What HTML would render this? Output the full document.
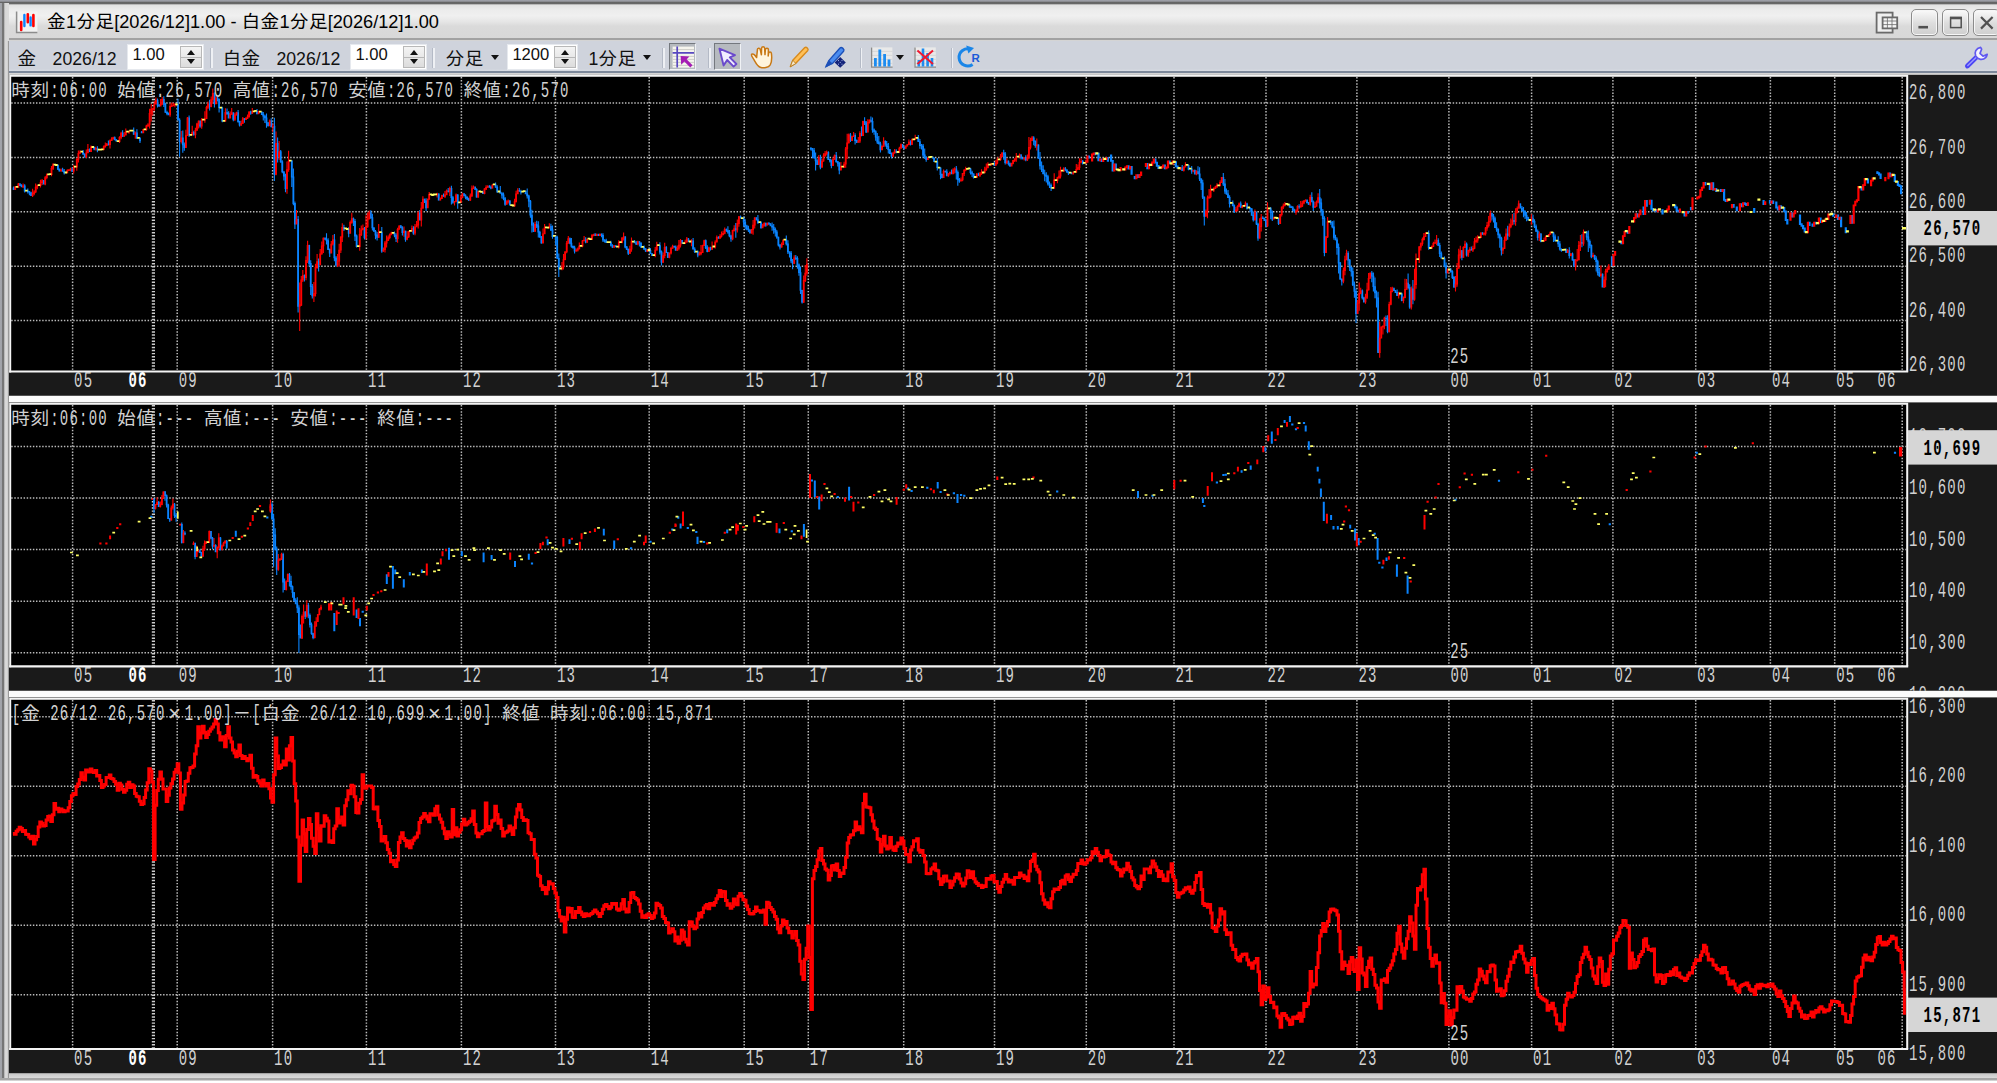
<!DOCTYPE html>
<html lang="ja"><head><meta charset="utf-8"><title>金1分足[2026/12]1.00 - 白金1分足[2026/12]1.00</title>
<style>
html,body{margin:0;padding:0}
body{width:1997px;height:1083px;position:relative;overflow:hidden;background:#d4d4d4;font-family:"Liberation Sans","IPAGothic","Noto Sans CJK JP",sans-serif;color:#111}
.abs{position:absolute}
#frameL{left:0;top:3px;width:9px;height:1075.4px;background:linear-gradient(90deg,#a4a6ac 0,#a0a2a8 1.6px,#787878 2.4px,#6a6a6a 3.2px,#8a8a8a 4px,#d6d6d6 4.8px,#dadada 7.4px,#9a9a9a 8.1px,#9a9a9a 9px)}
#frameL2{left:7px;top:3px;width:2px;height:37.6px;background:#dadada}
#frameT{left:0;top:0;width:1997px;height:5px;background:linear-gradient(180deg,#9c9ea6 0,#9a9ca4 1.2px,#747476 1.9px,#626262 2.6px,#626262 3.4px,#808080 4px,#c4c4c4 4.6px,#e2e2e2 5px)}
#title{left:4px;top:4.6px;width:1993px;height:33.9px;background:linear-gradient(180deg,#e2e2e2 0,#ececec 15%,#f0f0f0 33%,#e6e6e6 50%,#dadada 64%,#d8d8d8 100%);border-bottom:2.4px solid #a2a2a2}
#tool{left:9px;top:40.9px;width:1988px;height:30.6px;background:linear-gradient(180deg,#cfd3dc 0,#cfd3dc 93%,#d8dce3 100%);border-bottom:2.5px solid #7c889a}
#gapw{left:9px;top:74px;width:1988px;height:2px;background:#fff}
.sepw{left:9px;width:1988px;height:6.4px;background:#fbfbfb;border-bottom:1.5px solid #9a9a9a}
#bot{left:0;top:1073.2px;width:1997px;height:10px;background:linear-gradient(180deg,#c6c6c6 0,#d8d8d8 4.6px,#a6a6a6 5.4px,#a6a6a6 7.2px,#fff 7.8px)}
.tt{position:absolute;white-space:nowrap;line-height:1}
.j{font-family:"Liberation Sans","IPAGothic","Noto Sans CJK JP",sans-serif}
.spin{position:absolute;top:44px;height:26px;background:#fff;border:1px solid #e6e9ee;box-sizing:border-box}
.spin .bt{position:absolute;right:1px;top:1px;width:22px;bottom:1px;background:linear-gradient(180deg,#f4f4f4,#dcdcdc);border:1px solid #b8b8b8;box-sizing:border-box}
.spin .bt:before{content:"";position:absolute;left:0;right:0;top:50%;border-top:1px solid #b8b8b8}
.spin .bt i{position:absolute;left:5.5px;width:0;height:0;border-left:4.6px solid transparent;border-right:4.6px solid transparent}
.spin .bt i.u{top:3.2px;border-bottom:5.4px solid #111}
.spin .bt i.d{bottom:3.2px;border-top:5.4px solid #111}
.vsep{position:absolute;top:48px;width:1.6px;height:20px;background:#eef0f4;box-shadow:-1px 0 0 #b4bac6}
.dd{position:absolute;top:55.4px;width:0;height:0;border-left:4.2px solid transparent;border-right:4.2px solid transparent;border-top:5px solid #111}
.pressed{position:absolute;top:43.4px;height:26.4px;box-sizing:border-box;background:#b6babf;border:1.8px solid #74787e;border-right:1.6px solid #f0f2f5;border-bottom:1.6px solid #f0f2f5}
.wbtn{position:absolute;top:9.4px;height:26.4px;width:26.6px;box-sizing:border-box;border:1.9px solid #8c8c8c;border-radius:5px;background:linear-gradient(180deg,#fafafa,#dcdcdc 55%,#cfcfcf);box-shadow:inset 0 0 0 1px #f6f6f6}
</style></head><body>
<div class="abs" id="title"></div>
<div class="abs" id="frameT"></div>
<div class="abs" id="tool"></div>
<div class="abs" id="gapw"></div>
<div class="abs sepw" style="top:395.7px"></div>
<div class="abs sepw" style="top:690.7px"></div>
<div class="abs" id="bot"></div>
<div class="abs" id="frameL"></div>
<div class="abs" id="frameL2"></div>
<svg width="1997" height="1083" viewBox="0 0 1997 1083" style="position:absolute;left:0;top:0">
<style>.cj{font-family:"Liberation Mono","IPAGothic","Noto Sans CJK JP",monospace;font-size:19.25px}.la{font-family:"Liberation Mono","IPAGothic",monospace;font-size:14.00px;letter-spacing:1.22px;white-space:pre}</style>
<rect x="9" y="74.7" width="1988" height="321.0" fill="#1a1a1a"/>
<rect x="10.2" y="76.5" width="1897.0" height="295.0" fill="#000"/>
<clipPath id="cp0"><rect x="11.2" y="77.5" width="1895.0" height="293.0"/></clipPath>
<clipPath id="ca0"><rect x="9" y="75.5" width="1988" height="320.2"/></clipPath>
<path d="M11.2 103.0H1906.2M11.2 157.4H1906.2M11.2 211.8H1906.2M11.2 266.2H1906.2M11.2 320.6H1906.2M72.6 77.0V371.5M177.2 77.0V371.5M272.6 77.0V371.5M366.4 77.0V371.5M461.4 77.0V371.5M555.5 77.0V371.5M649.2 77.0V371.5M744.2 77.0V371.5M808.3 77.0V371.5M903.7 77.0V371.5M994.5 77.0V371.5M1086.3 77.0V371.5M1174.0 77.0V371.5M1266.0 77.0V371.5M1356.9 77.0V371.5M1448.9 77.0V371.5M1531.6 77.0V371.5M1612.9 77.0V371.5M1695.7 77.0V371.5M1770.4 77.0V371.5M1834.7 77.0V371.5M1902.2 77.0V371.5" stroke="#e0e0e0" stroke-width="1.5" stroke-dasharray="1.45 1.65" fill="none" opacity="0.84"/>
<path d="M153.4 77.0V371.5" stroke="#e0e0e0" stroke-width="3.2" stroke-dasharray="1.45 1.65" fill="none" opacity="0.92"/>
<g clip-path="url(#cp0)"><path d="M13.6 186.5V189.6M19.9 183.3V185.4M21.5 184.3V186.5M24.7 184.3V192.4M27.8 188.4V193.6M29.4 191.0V195.3M31.0 191.8V195.1M43.6 179.9V183.9M57.9 164.2V169.8M59.4 168.5V171.3M62.6 167.8V171.1M64.2 169.1V174.5M72.1 167.6V172.1M83.1 150.1V154.0M84.7 153.3V157.2M89.5 148.6V152.0M94.2 146.4V150.3M97.4 146.3V152.3M108.4 140.5V145.5M114.7 136.6V139.6M116.3 138.9V141.1M122.6 130.3V136.8M133.7 127.5V134.4M136.9 129.3V138.4M140.0 137.4V143.0M141.7 130.9V132.5M157.5 98.6V107.5M159.1 104.0V106.7M163.8 96.3V106.9M165.4 102.8V112.8M167.0 110.7V115.2M168.5 112.4V115.1M178.0 98.8V120.0M179.6 118.3V156.7M182.8 130.6V152.7M184.3 142.5V150.7M189.1 115.6V137.0M193.8 130.8V135.8M200.1 120.4V127.8M209.6 99.8V110.6M214.4 92.3V107.4M217.5 97.0V101.4M219.1 98.7V112.5M222.3 106.8V122.3M227.0 108.6V115.1M228.6 111.3V118.0M233.3 112.3V121.3M238.1 109.9V122.7M239.6 120.8V126.5M244.4 118.3V122.8M250.7 110.7V114.8M257.0 109.1V114.5M261.8 111.6V114.9M263.3 111.9V120.6M264.9 114.8V123.0M266.5 113.5V127.8M268.1 122.1V126.3M271.2 118.3V126.7M274.4 117.8V181.0M277.6 137.5V162.5M280.7 149.9V162.8M282.3 160.3V173.3M283.9 171.2V180.5M285.5 173.7V192.3M291.8 160.2V187.0M293.4 168.6V205.2M294.9 201.5V229.1M298.1 216.0V312.5M304.4 274.5V281.4M309.2 244.7V266.2M310.7 260.2V294.9M312.3 283.9V298.4M318.6 258.4V271.4M325.0 237.5V239.4M326.5 233.3V244.4M328.1 238.3V249.4M329.7 248.6V256.9M334.4 233.9V261.2M336.0 255.9V266.5M343.9 224.7V231.1M348.7 227.3V237.3M353.4 217.6V226.1M355.0 218.9V241.1M356.6 234.4V247.4M364.5 227.0V239.4M370.8 210.3V219.0M372.4 213.8V230.5M373.9 227.2V231.2M375.5 229.9V239.2M377.1 232.0V240.6M381.8 227.0V252.7M394.5 231.6V237.3M396.1 233.3V242.0M400.8 224.9V227.7M402.4 226.3V235.6M405.5 230.8V241.8M413.4 226.3V234.8M419.8 210.0V219.8M424.5 198.7V202.9M426.1 198.2V210.9M438.7 193.4V200.2M443.5 193.4V196.5M448.2 188.0V192.4M451.4 185.8V204.5M452.9 196.0V203.7M457.7 194.3V208.7M464.0 192.9V196.1M465.6 194.2V199.3M467.2 196.3V199.9M468.7 197.8V201.1M475.1 186.5V189.7M476.6 188.3V197.5M483.0 190.5V193.8M489.3 184.9V187.8M490.9 185.4V189.2M495.6 182.6V187.8M497.2 185.3V193.1M500.3 185.9V193.1M501.9 192.1V198.4M503.5 192.4V200.2M505.1 197.1V205.7M509.8 200.3V205.0M519.3 188.1V191.5M520.9 189.7V194.6M525.6 190.4V194.1M527.2 188.5V198.5M528.8 194.8V207.3M530.4 200.1V217.7M531.9 209.7V232.5M533.5 222.4V232.0M536.7 220.8V227.9M538.3 221.2V237.5M539.8 230.7V237.8M541.4 236.1V243.4M550.9 223.7V231.0M552.5 225.4V238.7M555.6 235.9V245.2M557.2 235.8V258.7M558.8 253.5V277.1M569.9 237.5V244.2M571.4 237.9V247.8M573.0 245.6V248.5M574.6 245.8V253.5M585.7 237.3V243.2M595.1 233.0V236.0M598.3 233.7V235.8M601.5 233.5V237.3M603.0 233.3V242.0M604.6 239.3V242.6M606.2 238.8V242.7M610.9 240.7V246.5M612.5 244.2V247.7M615.7 245.3V247.1M625.2 236.3V248.2M626.7 245.9V250.0M628.3 248.5V255.0M634.6 240.0V242.8M636.2 241.1V245.1M639.4 241.2V246.4M641.0 242.2V248.0M644.1 245.5V250.1M645.7 248.1V252.1M650.4 248.0V253.3M652.0 253.1V255.6M659.9 242.3V254.6M661.5 250.4V265.4M666.2 246.0V252.6M667.8 251.9V258.0M674.1 245.5V247.4M675.7 245.6V250.3M682.0 240.1V243.3M688.4 238.0V241.4M693.1 237.9V249.3M694.7 247.3V253.1M697.8 250.4V257.2M705.7 239.5V249.0M707.3 245.2V252.2M710.5 246.7V250.4M718.4 236.2V238.3M726.3 228.5V231.9M727.9 226.2V233.8M729.4 229.9V237.2M731.0 234.7V241.8M735.8 222.9V237.7M740.5 215.4V218.3M743.7 216.6V226.7M745.2 219.2V229.5M746.8 224.7V230.2M748.4 225.8V231.9M750.0 229.4V232.8M756.3 217.3V219.9M757.9 214.9V223.3M761.0 221.3V228.4M765.8 222.6V226.7M768.9 222.2V225.0M770.5 223.3V225.7M772.1 222.5V230.8M773.7 223.9V233.8M775.3 227.5V236.4M776.8 230.0V238.8M778.4 236.8V246.5M780.0 244.0V249.4M786.3 235.6V245.4M787.9 240.2V254.1M789.5 251.4V257.5M791.1 250.9V262.9M792.6 259.0V269.3M795.8 255.0V259.9M797.4 256.2V268.8M799.0 263.6V275.8M800.5 266.6V294.1M802.1 289.7V303.4M810.9 147.2V150.6M812.5 148.0V158.2M814.1 147.9V157.9M815.6 152.5V170.4M817.2 159.2V164.8M820.4 154.7V169.3M828.3 151.2V159.7M829.9 158.8V162.4M831.4 159.4V168.2M836.2 151.9V162.7M837.8 160.9V166.5M839.3 162.1V174.2M850.4 133.1V142.1M855.1 133.3V144.4M856.7 139.5V143.1M861.5 126.6V136.2M864.6 117.2V125.0M866.2 121.1V132.9M870.9 116.4V122.4M872.5 117.4V132.7M874.1 128.5V134.8M875.7 130.2V140.8M877.3 132.9V143.9M878.8 136.1V144.2M880.4 141.7V152.4M885.2 140.2V146.5M886.7 141.0V149.1M888.3 143.0V153.4M889.9 148.9V153.8M891.5 152.6V158.6M896.2 149.3V153.3M902.5 144.1V147.4M904.1 146.2V149.2M910.4 140.2V145.5M918.3 135.1V141.3M919.9 138.9V148.7M921.5 144.0V149.6M923.1 144.0V157.5M924.7 148.6V159.0M926.2 156.6V161.8M932.6 156.4V157.9M934.1 157.5V161.8M937.3 158.1V170.4M940.5 167.4V179.3M942.0 173.5V178.2M945.2 170.5V172.0M946.8 169.2V175.6M951.5 169.6V173.7M956.3 165.9V179.4M957.8 170.5V185.7M959.4 178.1V182.8M970.5 168.0V174.6M972.1 170.7V177.0M973.6 173.4V178.6M978.4 172.8V175.8M994.2 162.0V165.9M1003.7 149.7V159.7M1005.2 151.9V164.6M1008.4 160.4V165.5M1010.0 162.4V166.6M1021.0 154.0V159.5M1022.6 157.5V159.3M1025.8 155.3V161.3M1033.7 136.2V145.3M1035.3 140.6V147.7M1038.4 144.4V158.8M1040.0 152.0V169.5M1041.6 161.5V171.9M1043.2 165.2V173.9M1044.7 169.8V181.2M1046.3 172.2V182.5M1047.9 174.8V185.6M1049.5 181.4V188.0M1051.1 183.6V191.0M1065.3 166.9V171.3M1066.9 169.5V172.7M1068.4 171.2V174.9M1071.6 172.3V173.8M1082.7 159.9V164.4M1182.2 164.9V171.1M1188.5 164.5V170.2M1191.7 165.9V173.7M1194.8 169.5V173.9M1198.0 166.3V173.6M1199.6 167.3V180.9M1201.2 178.5V190.0M1202.7 179.8V199.1M1204.3 196.6V225.5M1223.3 173.0V186.1M1224.9 178.9V193.7M1226.4 188.4V194.7M1228.0 190.0V197.5M1229.6 195.3V207.5M1232.8 200.6V205.9M1234.3 204.4V212.9M1240.7 201.4V207.5M1247.0 202.8V209.4M1250.1 207.5V212.2M1251.7 207.9V215.3M1253.3 211.5V221.4M1256.5 211.5V224.9M1258.0 222.8V240.8M1262.8 216.3V218.6M1264.4 217.6V220.7M1265.9 219.1V227.3M1270.7 206.9V219.3M1272.3 210.5V221.1M1278.6 218.0V225.1M1289.6 204.2V207.4M1291.2 205.7V208.0M1292.8 206.0V210.9M1294.4 208.7V212.3M1299.1 204.2V208.7M1307.0 199.2V203.4M1308.6 202.1V204.7M1311.8 192.2V201.6M1313.3 200.6V211.1M1319.7 189.1V208.4M1321.2 198.6V215.7M1322.8 209.1V225.8M1324.4 216.3V256.2M1330.7 220.0V224.7M1332.3 220.9V228.2M1333.9 220.4V239.7M1335.5 234.8V240.3M1337.0 237.4V254.8M1338.6 243.5V273.6M1340.2 261.9V279.7M1341.8 278.6V285.5M1348.1 251.2V265.0M1349.7 259.1V271.0M1351.3 266.4V276.6M1352.8 267.6V286.0M1354.4 281.6V297.8M1356.0 288.5V323.1M1362.3 289.6V299.6M1363.9 296.8V302.4M1371.8 270.9V282.3M1373.4 272.6V291.6M1375.0 277.6V298.2M1376.5 290.4V307.4M1378.1 291.7V352.5M1386.0 315.6V325.9M1387.6 315.2V333.2M1393.9 287.6V291.1M1395.5 290.0V292.9M1397.1 289.6V296.1M1401.8 292.8V301.2M1408.1 273.6V289.2M1409.7 284.3V308.7M1412.9 280.0V304.3M1428.7 230.4V249.8M1438.2 238.3V245.9M1439.7 242.7V257.0M1441.3 251.4V258.2M1444.5 256.6V267.3M1446.1 262.4V278.4M1450.8 268.0V272.7M1452.4 270.2V279.0M1454.0 275.9V288.0M1461.9 250.0V260.2M1466.6 242.5V256.4M1471.3 246.4V250.2M1482.4 232.2V234.3M1491.9 212.7V220.5M1493.5 213.9V222.6M1495.0 216.8V228.1M1496.6 222.3V231.7M1498.2 228.3V238.3M1499.8 233.4V247.7M1501.4 236.8V255.5M1507.7 225.8V239.8M1514.0 213.0V224.5M1520.3 203.4V207.8M1521.9 206.0V211.8M1523.5 206.9V217.2M1525.1 210.2V219.1M1526.6 212.0V221.2M1528.2 216.7V220.0M1533.0 214.8V223.1M1534.5 219.2V228.0M1536.1 224.5V231.8M1537.7 229.4V240.6M1540.9 233.1V242.3M1553.5 231.9V242.1M1555.1 234.5V241.4M1558.2 236.2V246.9M1559.8 240.9V250.6M1561.4 248.4V251.7M1566.1 248.5V252.3M1569.3 247.2V258.6M1572.5 252.5V260.5M1574.0 258.9V265.9M1581.9 234.3V247.2M1586.7 231.0V240.3M1588.3 230.4V251.9M1589.8 239.6V248.3M1591.4 244.4V258.3M1594.6 254.7V260.0M1596.2 256.2V271.4M1597.7 259.8V275.5M1599.3 267.9V277.1M1602.5 273.6V286.9" stroke="#0a84ff" stroke-width="1.1" fill="none"/><path d="M15.2 186.2V189.4M18.4 183.0V187.5M23.1 183.4V187.9M32.6 188.7V196.9M34.2 190.3V195.2M35.7 183.5V193.0M37.3 184.7V189.3M40.5 179.7V187.5M42.1 179.1V185.0M45.2 175.9V185.2M46.8 173.5V179.2M51.5 166.0V176.3M53.1 163.3V169.9M61.0 168.5V171.2M67.3 169.3V172.8M68.9 169.3V170.4M70.5 167.8V171.3M73.7 165.1V173.6M76.8 158.0V170.8M78.4 150.4V162.4M80.0 150.2V153.5M86.3 149.6V158.0M87.9 144.1V152.9M91.0 145.5V152.1M95.8 146.7V150.5M103.7 145.6V150.3M105.3 142.4V147.5M106.8 142.9V145.9M110.0 139.6V148.5M111.6 137.2V140.9M113.2 136.8V138.9M119.5 136.2V143.0M121.1 131.7V139.3M124.2 132.1V136.7M125.8 128.6V134.9M129.0 130.8V133.8M135.3 131.4V138.8M143.3 129.0V132.5M146.4 124.7V130.8M148.0 123.2V126.9M149.6 108.8V128.4M151.2 104.1V121.5M152.7 107.7V115.4M154.3 101.3V111.0M155.9 97.6V103.9M160.6 99.0V105.9M162.2 96.9V104.3M170.1 103.5V116.8M171.7 102.6V106.9M173.3 102.8V106.0M174.9 103.3V107.3M181.2 131.1V143.4M185.9 129.8V147.5M187.5 116.9V135.6M192.2 125.8V135.0M195.4 127.8V138.2M197.0 122.8V130.6M198.6 120.5V128.4M201.7 118.0V128.8M204.9 111.2V122.8M206.5 105.8V118.8M208.0 101.6V109.0M211.2 96.4V107.3M212.8 88.4V103.7M215.9 95.3V104.4M225.4 108.2V121.6M230.2 111.5V117.8M231.7 108.0V114.4M234.9 112.7V120.9M236.5 111.8V115.6M241.2 120.6V125.8M242.8 117.0V123.9M246.0 117.0V119.8M247.5 114.4V118.5M249.1 111.6V117.1M252.3 108.0V113.7M258.6 110.7V114.2M269.7 119.6V125.8M272.8 123.6V132.0M276.0 131.6V175.3M279.1 141.0V160.0M287.0 161.6V193.8M288.6 150.7V171.8M296.5 209.9V223.9M299.7 282.6V331.1M301.3 276.1V306.1M302.8 269.9V281.9M306.0 256.3V280.3M307.6 240.8V262.9M313.9 282.1V302.1M315.5 263.8V296.6M317.1 254.0V268.8M320.2 248.9V264.5M321.8 241.6V254.7M323.4 237.4V253.0M331.3 241.1V253.1M332.9 234.9V245.4M337.6 254.1V267.0M339.2 243.8V266.4M340.8 236.4V253.0M342.3 223.2V242.1M350.2 220.5V233.1M351.8 212.8V223.8M359.7 227.9V250.8M361.3 225.4V235.9M362.9 224.5V229.7M366.0 215.3V239.6M367.6 212.6V227.8M369.2 210.6V219.0M378.7 224.1V238.1M383.4 247.6V251.8M385.0 241.1V252.4M386.6 235.6V247.6M388.2 235.6V241.0M389.7 233.5V239.3M391.3 231.8V234.9M397.6 227.8V242.8M399.2 225.5V229.2M404.0 226.4V236.8M407.1 231.2V240.2M408.7 230.8V238.1M411.9 225.6V231.4M415.0 224.1V235.2M416.6 220.9V226.5M418.2 211.2V228.6M421.3 201.9V226.4M422.9 196.2V208.8M427.7 198.5V207.8M429.2 192.1V199.1M437.1 192.7V197.5M440.3 197.4V200.3M441.9 194.7V198.4M445.0 190.9V198.0M446.6 189.6V194.9M449.8 186.8V196.1M454.5 200.9V205.4M456.1 193.4V201.9M460.8 195.3V202.7M462.4 193.1V197.9M470.3 193.5V201.1M471.9 185.5V196.9M473.5 185.4V188.3M478.2 190.7V197.7M484.5 188.2V194.2M486.1 185.3V189.9M487.7 185.2V187.7M492.4 184.2V188.3M506.7 200.2V204.5M508.2 199.4V203.5M514.6 198.8V206.7M516.1 190.8V202.4M517.7 188.3V194.0M535.1 221.8V231.8M543.0 228.5V242.9M544.6 223.9V234.0M549.3 223.3V227.8M562.0 261.9V270.2M563.5 254.1V269.6M565.1 251.3V260.3M566.7 241.1V253.2M568.3 236.0V243.0M576.2 248.6V251.4M577.8 247.6V251.4M579.3 242.5V249.3M582.5 239.9V247.2M584.1 236.1V241.1M587.2 238.4V242.9M592.0 234.0V239.4M593.6 233.7V236.3M596.7 233.4V235.5M599.9 233.7V235.9M614.1 244.9V247.1M618.8 240.3V248.6M622.0 236.9V243.3M623.6 232.5V240.6M629.9 245.8V253.9M631.5 237.5V251.8M637.8 240.8V245.3M647.3 249.0V251.9M655.2 246.9V257.2M656.8 241.7V250.4M663.1 252.4V262.5M664.7 242.7V258.2M669.4 252.6V258.2M671.0 246.9V254.5M672.6 244.7V248.4M677.3 245.5V250.7M678.9 240.1V250.2M680.5 239.0V247.6M685.2 239.8V243.6M686.8 237.0V242.5M691.5 239.3V246.3M699.4 251.5V254.7M701.0 245.1V255.2M702.6 244.8V252.4M704.2 239.8V245.8M708.9 246.7V251.4M712.1 241.6V249.4M715.2 240.3V248.5M716.8 235.5V241.8M720.0 234.2V238.3M721.5 231.6V237.4M723.1 230.7V234.8M724.7 227.6V234.2M732.6 229.8V240.2M734.2 225.3V231.4M737.3 219.6V232.5M738.9 216.2V226.7M751.6 229.0V233.6M753.1 220.1V234.7M754.7 217.3V228.6M762.6 223.7V227.4M764.2 222.3V226.6M767.4 222.7V225.2M781.6 242.5V247.4M783.2 239.5V245.1M794.2 255.3V264.0M803.7 275.6V303.0M805.3 265.1V282.1M806.9 258.3V275.8M818.8 155.1V164.4M822.0 158.9V167.7M823.5 153.3V161.6M825.1 151.0V156.7M826.7 150.4V155.4M833.0 157.2V165.4M834.6 154.4V159.8M840.9 162.0V169.9M844.1 161.8V168.0M845.7 146.9V167.7M847.2 133.8V159.1M848.8 133.6V143.5M852.0 136.0V141.0M853.6 131.9V136.6M858.3 137.0V142.6M859.9 131.3V143.1M863.0 120.8V135.7M867.8 119.3V132.3M869.4 119.4V123.6M882.0 145.3V150.0M883.6 137.3V146.7M893.1 152.2V156.8M894.6 149.0V153.7M899.4 146.7V152.9M901.0 143.6V148.8M905.7 145.6V148.5M907.3 143.9V146.3M908.9 139.6V144.6M912.0 138.6V145.0M915.2 134.8V140.1M927.8 157.3V159.9M943.6 169.4V177.8M948.4 173.2V176.7M949.9 171.4V175.3M953.1 168.2V173.7M954.7 167.2V173.6M961.0 177.4V181.1M962.6 172.9V181.2M964.2 169.2V176.0M965.7 166.7V171.3M976.8 172.9V177.2M980.0 172.0V177.0M981.5 169.3V175.1M984.7 166.7V172.9M986.3 163.5V170.8M987.9 162.3V168.0M991.0 163.2V164.7M995.8 160.1V166.1M997.3 157.2V164.3M1000.5 154.1V160.8M1002.1 152.0V157.2M1006.8 158.3V164.3M1011.6 162.7V165.6M1013.1 160.0V164.3M1014.7 158.2V162.0M1016.3 153.1V161.7M1019.5 153.4V157.5M1024.2 157.2V160.6M1027.4 154.5V161.1M1028.9 137.0V159.1M1030.5 137.8V149.6M1032.1 136.0V141.1M1036.8 138.6V150.4M1054.2 173.3V188.0M1057.4 176.7V183.3M1059.0 170.5V179.1M1060.5 166.7V178.4M1063.7 167.3V171.9M1073.2 171.4V174.4M1076.3 164.0V172.8M1077.9 164.5V170.0M1079.5 158.2V170.0M1081.1 158.2V162.3M1085.8 159.8V163.6M1180.6 167.0V170.0M1183.8 166.3V171.4M1185.4 162.2V166.8M1193.3 169.8V172.2M1196.4 170.3V175.2M1205.9 209.4V216.1M1207.5 195.5V218.2M1209.1 189.1V198.7M1210.6 184.7V198.3M1213.8 187.2V192.1M1215.4 185.8V188.4M1217.0 183.3V187.9M1220.1 180.2V186.1M1221.7 177.0V182.6M1235.9 207.0V211.4M1237.5 205.2V211.2M1239.1 202.5V206.5M1242.2 205.0V208.2M1245.4 201.5V205.9M1254.9 209.4V220.6M1259.6 218.3V238.5M1261.2 214.0V231.6M1267.5 202.3V227.1M1273.8 216.7V219.1M1280.2 213.9V223.7M1281.7 206.6V216.6M1283.3 203.5V209.0M1284.9 202.1V205.6M1296.0 209.3V214.7M1297.5 205.3V211.4M1300.7 201.1V207.5M1302.3 200.8V207.1M1303.9 199.9V204.2M1305.4 199.2V201.5M1310.2 194.7V205.7M1314.9 201.7V207.9M1316.5 200.4V206.3M1318.1 193.2V203.2M1326.0 235.9V253.1M1327.6 217.0V237.9M1343.4 267.4V283.3M1344.9 255.8V275.3M1346.5 249.7V259.6M1357.6 299.9V313.9M1359.2 282.5V310.7M1360.7 287.8V294.2M1365.5 293.7V303.8M1367.1 282.7V299.1M1368.6 272.9V290.4M1370.2 272.6V278.0M1379.7 321.8V357.7M1381.3 326.2V337.9M1382.9 325.4V334.6M1384.4 316.8V329.3M1389.2 301.8V332.5M1390.8 287.1V305.3M1392.3 286.7V292.3M1398.7 291.8V298.6M1403.4 296.5V303.3M1405.0 278.7V298.3M1406.6 279.0V289.8M1411.3 286.4V309.6M1414.5 268.7V300.7M1416.0 253.5V288.8M1419.2 246.1V263.1M1420.8 242.4V250.4M1422.4 237.6V245.7M1423.9 233.0V240.4M1425.5 232.2V236.4M1431.8 245.6V248.6M1433.4 241.7V247.1M1435.0 239.4V243.4M1436.6 235.1V245.3M1447.6 268.4V273.3M1455.5 276.1V291.4M1457.1 263.1V286.7M1458.7 248.7V268.3M1460.3 245.7V258.6M1463.4 246.3V257.5M1465.0 240.7V247.8M1468.2 249.8V257.0M1469.8 247.3V252.7M1472.9 245.7V252.1M1474.5 238.0V249.3M1476.1 236.6V243.3M1477.7 235.3V242.7M1480.8 232.6V238.1M1484.0 232.2V235.4M1485.6 226.9V235.4M1487.1 222.0V230.7M1488.7 215.9V227.6M1490.3 210.4V222.7M1502.9 247.2V253.9M1504.5 236.4V248.5M1506.1 228.4V239.9M1509.3 223.4V236.9M1510.8 218.5V228.2M1512.4 213.9V224.6M1515.6 208.3V225.7M1517.2 206.5V212.8M1518.7 200.5V208.1M1531.4 214.3V224.8M1539.3 231.5V240.9M1544.0 237.8V241.8M1545.6 235.6V240.7M1548.8 234.0V236.3M1550.3 231.4V234.5M1567.7 248.9V252.2M1570.9 253.1V256.2M1575.6 259.0V270.6M1577.2 248.9V261.6M1578.8 241.1V260.3M1580.4 235.1V250.9M1583.5 229.4V245.8M1593.0 252.7V256.6M1600.9 265.4V277.4M1604.1 276.6V288.0M1605.6 268.8V287.3M1607.2 266.7V272.8M1608.8 264.0V270.0" stroke="#ff0000" stroke-width="1.1" fill="none"/><path d="M13.6 187.4V190.0M19.9 183.6V186.0M21.5 185.2V187.2M24.7 185.6V191.4M27.8 190.6V192.0M29.4 191.2V193.2M31.0 192.4V195.9M43.6 180.2V184.5M57.9 165.0V169.8M59.4 169.0V171.4M62.6 169.5V171.7M64.2 170.9V173.3M72.1 168.8V171.4M83.1 151.7V154.8M84.7 154.0V157.4M89.5 149.0V152.1M94.2 147.0V149.6M97.4 148.1V150.4M108.4 143.7V145.1M114.7 137.3V140.3M116.3 139.5V141.6M122.6 132.7V136.7M133.7 130.7V134.7M136.9 132.4V138.8M140.0 137.8V141.3M141.7 131.5V133.2M157.5 99.7V105.5M159.1 104.7V106.6M163.8 99.0V104.7M165.4 103.9V112.7M167.0 111.9V114.0M168.5 113.2V115.3M178.0 104.3V120.6M179.6 119.8V142.1M182.8 137.4V145.3M184.3 144.5V147.9M189.1 117.5V135.5M193.8 132.0V135.0M200.1 120.7V126.5M209.6 103.5V106.9M214.4 92.9V103.9M217.5 97.4V99.5M219.1 98.7V108.0M222.3 107.7V121.6M227.0 112.0V113.9M228.6 113.1V118.4M233.3 112.4V119.7M238.1 112.3V121.9M239.6 121.1V125.4M244.4 118.3V120.1M250.7 111.6V113.7M257.0 110.9V113.9M261.8 111.7V115.1M263.3 114.3V116.5M264.9 115.7V118.3M266.5 117.5V123.3M268.1 122.5V126.3M271.2 120.4V127.3M274.4 125.7V174.7M277.6 142.9V157.4M280.7 151.2V162.3M282.3 161.5V172.2M283.9 171.4V176.4M285.5 175.6V189.0M291.8 160.6V177.4M293.4 176.6V203.9M294.9 203.1V224.6M298.1 219.0V306.7M304.4 275.2V278.0M309.2 244.9V263.9M310.7 263.1V287.0M312.3 286.2V296.2M318.6 261.2V265.3M325.0 237.7V239.8M326.5 239.0V241.1M328.1 240.3V249.9M329.7 249.1V253.6M334.4 239.5V258.3M336.0 257.5V265.5M343.9 227.1V229.5M348.7 229.0V233.7M353.4 218.3V221.8M355.0 221.0V236.4M356.6 235.6V247.0M364.5 227.9V238.3M370.8 212.2V218.0M372.4 217.2V228.2M373.9 227.4V231.7M375.5 230.9V235.4M377.1 234.6V237.8M381.8 232.2V251.6M394.5 232.9V235.5M396.1 234.7V239.0M400.8 225.5V228.2M402.4 227.4V232.9M405.5 230.8V239.7M413.4 228.0V233.4M419.8 212.4V220.4M424.5 198.8V201.3M426.1 200.5V208.2M438.7 193.5V200.5M443.5 194.9V196.7M448.2 190.4V191.9M451.4 187.9V198.0M452.9 197.2V202.7M457.7 194.4V203.4M464.0 193.5V196.2M465.6 195.4V197.9M467.2 197.1V199.4M468.7 198.6V200.5M475.1 186.7V189.8M476.6 189.0V197.5M483.0 191.9V194.1M489.3 186.1V187.5M490.9 186.7V188.5M495.6 184.4V187.5M497.2 186.7V191.7M500.3 191.5V193.8M501.9 193.0V195.4M503.5 194.6V199.1M505.1 198.3V204.7M509.8 200.6V205.5M519.3 190.0V191.7M520.9 190.9V192.5M525.6 191.1V194.2M527.2 193.4V196.3M528.8 195.5V201.6M530.4 200.8V215.5M531.9 214.7V225.6M533.5 224.8V231.7M536.7 224.0V226.4M538.3 225.6V232.6M539.8 231.8V237.5M541.4 236.7V243.4M550.9 225.9V230.4M552.5 229.6V237.1M555.6 235.9V237.7M557.2 236.9V258.8M558.8 258.0V269.2M569.9 238.2V243.6M571.4 242.8V246.7M573.0 245.9V248.3M574.6 247.5V251.6M585.7 239.8V242.4M595.1 234.3V235.9M598.3 234.2V236.0M601.5 233.8V235.8M603.0 235.0V240.5M604.6 239.7V241.4M606.2 240.6V242.9M610.9 242.2V245.8M612.5 245.0V247.8M615.7 245.5V247.2M625.2 236.5V247.4M626.7 246.6V249.7M628.3 248.9V253.8M634.6 241.6V243.2M636.2 242.4V244.6M639.4 241.3V243.6M641.0 242.8V247.5M644.1 246.8V249.5M645.7 248.7V251.4M650.4 250.0V254.0M652.0 253.2V256.0M659.9 245.2V252.4M661.5 251.6V262.8M666.2 247.0V253.0M667.8 252.2V257.8M674.1 245.9V247.6M675.7 246.8V250.7M682.0 240.1V243.8M688.4 238.4V242.0M693.1 240.4V249.5M694.7 248.7V251.9M697.8 251.6V255.5M705.7 240.2V248.2M707.3 247.4V252.1M710.5 247.4V249.8M718.4 237.0V238.7M726.3 229.1V231.0M727.9 230.2V232.6M729.4 231.8V236.3M731.0 235.5V239.3M735.8 228.3V230.2M740.5 216.3V218.5M743.7 218.1V222.6M745.2 221.8V226.4M746.8 225.6V229.4M748.4 228.6V230.3M750.0 229.5V233.6M756.3 217.6V220.4M757.9 219.6V223.5M761.0 222.2V228.2M765.8 223.1V225.4M768.9 222.8V224.3M770.5 223.5V226.2M772.1 225.4V227.5M773.7 226.7V229.9M775.3 229.1V232.4M776.8 231.6V237.6M778.4 236.8V245.6M780.0 244.8V247.5M786.3 239.6V244.3M787.9 243.5V252.3M789.5 251.5V253.6M791.1 252.8V261.2M792.6 260.4V263.7M795.8 257.4V258.9M797.4 258.1V265.4M799.0 264.6V273.1M800.5 272.3V290.7M802.1 289.9V302.4M810.9 147.8V149.4M812.5 148.6V151.1M814.1 150.3V158.4M815.6 157.6V161.3M817.2 160.5V165.1M820.4 157.0V167.5M828.3 152.0V159.9M829.9 159.1V161.4M831.4 160.6V166.0M836.2 155.0V162.0M837.8 161.2V163.8M839.3 163.0V170.6M850.4 134.5V141.1M855.1 135.1V140.9M856.7 140.1V142.8M861.5 133.0V136.0M864.6 121.1V123.3M866.2 122.5V132.6M870.9 119.7V121.7M872.5 120.9V130.3M874.1 129.5V132.0M875.7 131.2V137.5M877.3 136.7V142.4M878.8 141.6V144.3M880.4 143.5V150.3M885.2 140.9V144.6M886.7 143.8V147.0M888.3 146.2V150.1M889.9 149.3V153.9M891.5 153.1V156.7M896.2 150.8V153.0M902.5 144.3V147.8M904.1 147.0V148.8M910.4 141.7V144.8M918.3 137.8V142.1M919.9 141.3V145.9M921.5 145.1V146.5M923.1 145.7V155.4M924.7 154.6V157.5M926.2 156.7V160.0M932.6 156.8V158.5M934.1 157.7V162.0M937.3 161.6V168.0M940.5 167.6V174.9M942.0 174.1V178.0M945.2 170.9V172.4M946.8 171.6V176.3M951.5 172.1V174.2M956.3 168.4V172.7M957.8 171.9V180.0M959.4 179.2V181.5M970.5 168.4V173.0M972.1 172.2V174.3M973.6 173.5V177.8M978.4 173.8V175.7M994.2 163.8V165.4M1003.7 152.8V154.2M1005.2 153.4V163.1M1008.4 160.8V164.0M1010.0 163.2V166.4M1021.0 154.8V158.3M1022.6 157.5V159.2M1025.8 157.5V160.3M1033.7 137.4V141.5M1035.3 140.7V146.0M1038.4 144.6V158.6M1040.0 157.8V166.3M1041.6 165.5V170.0M1043.2 169.2V174.2M1044.7 173.4V175.7M1046.3 174.9V177.0M1047.9 176.2V184.2M1049.5 183.4V185.7M1051.1 184.9V188.4M1065.3 168.3V170.4M1066.9 169.6V172.6M1068.4 171.8V173.3M1071.6 172.7V174.3M1082.7 161.1V163.9M1182.2 167.5V170.8M1188.5 164.9V169.8M1191.7 168.6V171.5M1194.8 169.9V174.4M1198.0 171.2V174.2M1199.6 173.4V179.3M1201.2 178.5V183.3M1202.7 182.5V197.6M1204.3 196.8V216.7M1223.3 177.1V184.4M1224.9 183.6V191.6M1226.4 190.8V194.2M1228.0 193.4V197.9M1229.6 197.1V204.1M1232.8 202.8V206.2M1234.3 205.4V211.7M1240.7 203.5V207.8M1247.0 203.5V208.7M1250.1 207.5V209.2M1251.7 208.4V215.8M1253.3 215.0V220.2M1256.5 212.5V224.5M1258.0 223.7V238.5M1262.8 217.4V218.9M1264.4 218.1V220.9M1265.9 220.1V226.3M1270.7 208.3V213.1M1272.3 212.3V219.4M1278.6 218.0V223.9M1289.6 204.5V207.4M1291.2 206.6V208.1M1292.8 207.3V210.6M1294.4 209.8V212.6M1299.1 205.9V207.6M1307.0 200.0V203.1M1308.6 202.3V204.7M1311.8 197.0V202.3M1313.3 201.5V207.8M1319.7 197.3V203.4M1321.2 202.6V211.6M1322.8 210.8V218.9M1324.4 218.1V253.1M1330.7 221.6V223.1M1332.3 222.3V227.3M1333.9 226.5V237.7M1335.5 236.9V240.3M1337.0 239.5V247.9M1338.6 247.1V263.4M1340.2 262.6V279.5M1341.8 278.7V281.6M1348.1 253.0V260.5M1349.7 259.7V268.1M1351.3 267.3V271.7M1352.8 270.9V285.2M1354.4 284.4V291.7M1356.0 290.9V314.0M1362.3 290.6V298.2M1363.9 297.4V302.3M1371.8 272.8V276.5M1373.4 275.7V287.1M1375.0 286.3V293.3M1376.5 292.5V298.3M1378.1 297.5V353.1M1386.0 317.8V319.3M1387.6 318.5V332.0M1393.9 288.3V291.0M1395.5 290.2V292.9M1397.1 292.1V296.1M1401.8 293.5V301.1M1408.1 282.7V288.0M1409.7 287.2V307.4M1412.9 288.6V299.8M1428.7 233.1V248.3M1438.2 239.9V245.7M1439.7 244.9V254.1M1441.3 253.3V258.6M1444.5 258.3V266.2M1446.1 265.4V273.2M1450.8 269.5V272.0M1452.4 271.2V277.9M1454.0 277.1V287.3M1461.9 250.3V257.7M1466.6 243.7V255.5M1471.3 249.0V250.6M1482.4 232.6V234.8M1491.9 212.9V216.5M1493.5 215.7V219.0M1495.0 218.2V228.1M1496.6 227.3V229.8M1498.2 229.0V235.2M1499.8 234.4V238.5M1501.4 237.7V250.6M1507.7 233.6V235.8M1514.0 219.9V222.0M1520.3 203.4V208.6M1521.9 207.8V210.7M1523.5 209.9V211.7M1525.1 210.9V215.8M1526.6 215.0V218.0M1528.2 217.2V220.5M1533.0 218.2V221.9M1534.5 221.1V227.1M1536.1 226.3V231.7M1537.7 230.9V238.1M1540.9 233.8V241.7M1553.5 232.4V237.2M1555.1 236.4V241.3M1558.2 240.7V244.3M1559.8 243.5V249.5M1561.4 248.7V251.1M1566.1 249.6V252.9M1569.3 250.3V255.9M1572.5 253.6V260.4M1574.0 259.6V266.7M1581.9 242.0V243.7M1586.7 232.3V237.4M1588.3 236.6V241.8M1589.8 241.0V245.7M1591.4 244.9V257.3M1594.6 255.1V259.0M1596.2 258.2V262.0M1597.7 261.2V273.1M1599.3 272.3V276.1M1602.5 273.7V287.6" stroke="#0a84ff" stroke-width="1.8" fill="none"/><path d="M1089.0 155.4V158.5M1095.3 152.4V155.2M1098.5 152.7V161.2M1101.6 158.5V161.9M1107.9 156.9V161.8M1111.1 154.6V161.7M1112.7 159.9V171.6M1115.8 163.6V170.0M1128.5 165.3V169.4M1131.6 166.0V174.8M1134.8 175.9V179.3M1138.0 174.3V178.0M1147.4 162.9V169.2M1155.3 158.6V163.5M1156.9 161.7V166.7M1158.5 164.9V169.0M1164.8 164.4V169.2M1169.6 160.6V163.8M1175.9 161.3V167.3M1177.5 165.5V168.7M1612.0 256.3V266.0M1621.4 241.1V244.2M1627.8 230.5V233.7M1637.2 213.3V217.5M1643.6 206.4V214.9M1646.7 199.9V206.7M1651.5 199.7V209.8M1653.0 208.0V211.4M1656.2 209.1V212.3M1662.5 209.2V214.5M1675.2 204.5V208.2M1676.7 206.4V211.5M1678.3 209.7V212.5M1684.6 211.6V216.5M1687.8 210.9V213.8M1691.0 206.9V210.3M1705.2 181.9V185.6M1709.9 183.2V189.9M1713.1 182.3V190.5M1716.2 187.9V192.1M1721.0 189.0V192.0M1724.1 189.0V200.8M1725.7 199.0V201.9M1733.6 203.9V207.7M1736.8 206.4V211.2M1741.5 203.2V207.2M1744.7 202.2V204.9M1746.3 203.1V206.1M1754.2 208.0V212.8M1763.6 199.9V205.0M1770.0 200.1V203.8M1773.1 200.5V203.9M1776.3 201.5V208.4M1777.9 206.6V210.6M1781.0 205.2V208.9M1784.2 207.0V212.2M1785.8 210.4V220.9M1787.3 219.1V224.5M1792.1 212.3V217.5M1800.0 214.6V225.0M1801.6 223.2V226.8M1803.1 225.0V229.3M1804.7 227.5V232.6M1809.5 221.8V226.0M1812.6 223.4V226.7M1815.8 221.7V224.5M1820.5 217.5V222.9M1833.2 213.3V216.7M1837.9 214.5V219.9M1841.1 216.8V227.2M1845.8 227.3V233.2M1852.1 215.0V223.7M1861.6 186.6V190.4M1867.9 178.6V183.4M1877.4 171.3V174.0M1879.0 172.2V175.4M1880.6 173.6V179.1M1890.0 172.4V177.2M1894.8 174.3V182.1M1897.9 181.1V186.0M1899.5 184.2V187.0M1901.1 185.2V194.2" stroke="#0a84ff" stroke-width="2.2" fill="none"/><path d="M15.2 186.4V190.0M18.4 183.6V187.7M23.1 185.6V187.2M32.6 193.1V195.9M34.2 191.4V193.9M35.7 186.8V192.2M37.3 185.5V187.6M40.5 182.2V186.0M42.1 180.2V183.0M45.2 177.3V184.5M46.8 174.4V178.1M51.5 168.0V174.9M53.1 164.3V168.8M61.0 169.5V171.4M67.3 170.3V173.3M68.9 169.5V171.1M70.5 168.8V170.3M73.7 167.1V171.4M76.8 159.1V167.5M78.4 152.9V159.9M80.0 151.8V153.7M86.3 152.5V157.4M87.9 149.0V153.3M91.0 146.7V152.1M95.8 148.1V149.6M103.7 146.5V150.1M105.3 145.2V147.3M106.8 143.7V146.0M110.0 140.2V145.1M111.6 138.8V141.0M113.2 137.3V139.6M119.5 136.9V142.0M121.1 132.7V137.7M124.2 134.7V136.7M125.8 131.4V135.5M129.0 131.0V132.5M135.3 132.4V134.7M143.3 129.1V133.2M146.4 125.4V130.1M148.0 124.5V126.2M149.6 112.9V125.3M151.2 108.9V113.7M152.7 107.9V109.7M154.3 103.7V108.7M155.9 99.7V104.5M160.6 103.9V106.6M162.2 99.0V104.7M170.1 106.0V115.3M171.7 105.4V106.8M173.3 104.7V106.2M174.9 104.0V105.5M181.2 137.4V142.1M185.9 135.2V147.9M187.5 117.5V136.0M192.2 132.0V135.6M195.4 130.0V135.0M197.0 123.6V130.8M198.6 120.7V124.4M201.7 119.2V126.5M204.9 118.2V120.4M206.5 107.0V119.0M208.0 103.5V107.8M211.2 99.3V106.9M212.8 92.9V100.1M215.9 97.4V103.9M225.4 112.0V121.6M230.2 114.0V118.4M231.7 112.4V114.8M234.9 114.5V119.7M236.5 112.3V115.3M241.2 123.0V125.4M242.8 118.3V123.8M246.0 118.1V120.1M247.5 116.6V118.9M249.1 111.6V117.4M252.3 111.5V113.7M258.6 111.3V113.9M269.7 120.4V126.3M272.8 125.7V127.3M276.0 142.9V174.7M279.1 151.2V157.4M287.0 169.3V189.0M288.6 160.8V170.1M296.5 219.0V224.6M299.7 304.6V306.7M301.3 279.6V305.4M302.8 275.2V280.4M306.0 260.0V278.0M307.6 244.9V260.8M313.9 293.2V296.2M315.5 267.1V294.0M317.1 261.2V267.9M320.2 253.5V265.3M321.8 245.5V254.3M323.4 237.7V246.3M331.3 243.7V253.6M332.9 239.5V244.5M337.6 260.8V265.5M339.2 249.8V261.6M340.8 236.6V250.6M342.3 227.1V237.4M350.2 222.1V233.7M351.8 218.3V222.9M359.7 234.0V247.0M361.3 229.5V234.8M362.9 227.9V230.3M366.0 226.4V238.3M367.6 218.7V227.2M369.2 212.2V219.5M378.7 232.0V237.8M383.4 249.3V251.6M385.0 242.6V250.1M386.6 240.3V243.4M388.2 237.3V241.1M389.7 234.5V238.1M391.3 232.6V235.3M397.6 228.9V239.0M399.2 225.5V229.7M404.0 230.8V232.9M407.1 236.5V239.7M408.7 231.1V237.3M411.9 228.0V231.6M415.0 226.4V233.4M416.6 224.6V227.2M418.2 212.4V225.4M421.3 207.8V220.4M422.9 198.8V208.6M427.7 199.0V208.2M429.2 194.0V199.8M437.1 193.5V195.2M440.3 198.3V200.5M441.9 194.9V199.1M445.0 194.5V196.7M446.6 190.4V195.3M449.8 187.9V191.9M454.5 201.0V202.7M456.1 194.4V201.8M460.8 197.2V203.1M462.4 193.5V198.0M470.3 195.5V200.5M471.9 188.3V196.3M473.5 186.7V189.1M478.2 191.2V197.5M484.5 188.6V194.1M486.1 186.9V189.4M487.7 186.1V187.7M492.4 184.7V188.5M506.7 201.4V204.7M508.2 200.6V202.2M514.6 201.3V206.3M516.1 193.4V202.1M517.7 190.0V194.2M535.1 224.0V231.7M543.0 233.4V243.4M544.6 227.2V234.2M549.3 225.9V228.4M562.0 266.4V269.3M563.5 259.2V267.2M565.1 251.4V260.0M566.7 242.9V252.2M568.3 238.2V243.7M576.2 249.7V251.6M577.8 248.5V250.5M579.3 245.7V249.3M582.5 240.5V246.6M584.1 239.8V241.3M587.2 239.1V242.4M592.0 235.1V239.9M593.6 234.3V235.9M596.7 234.2V235.9M599.9 233.8V236.0M614.1 245.5V247.8M618.8 242.1V247.5M622.0 237.7V242.9M623.6 236.5V238.5M629.9 248.7V253.8M631.5 241.2V249.5M637.8 241.3V244.6M647.3 249.7V251.4M655.2 249.8V256.0M656.8 245.2V250.6M663.1 255.3V262.8M664.7 247.0V256.1M669.4 252.7V257.8M671.0 247.9V253.5M672.6 245.9V248.7M677.3 247.9V250.7M678.9 244.8V248.7M680.5 240.1V245.6M685.2 241.8V243.9M686.8 238.4V242.6M691.5 240.4V242.3M699.4 253.4V255.5M701.0 252.1V254.2M702.6 245.3V252.9M704.2 240.2V246.1M708.9 247.4V252.1M712.1 246.9V249.8M715.2 241.7V247.3M716.8 237.0V242.5M720.0 235.9V238.7M721.5 234.5V236.7M723.1 232.9V235.3M724.7 229.1V233.7M732.6 230.1V239.3M734.2 228.3V230.9M737.3 223.1V230.2M738.9 216.3V223.9M751.6 229.3V233.6M753.1 224.8V230.1M754.7 217.6V225.6M762.6 225.5V228.2M764.2 223.1V226.3M767.4 222.8V225.4M781.6 244.2V247.5M783.2 239.8V245.0M794.2 257.4V263.7M803.7 280.1V302.4M805.3 272.8V280.9M806.9 264.1V273.6M818.8 157.0V165.1M822.0 160.8V167.5M823.5 155.4V161.6M825.1 153.3V156.2M826.7 152.0V154.1M833.0 158.9V166.0M834.6 155.0V159.7M840.9 166.1V170.6M844.1 163.8V167.4M845.7 148.4V164.6M847.2 142.5V149.2M848.8 134.5V143.3M852.0 136.3V141.1M853.6 135.1V137.1M858.3 140.7V142.8M859.9 133.0V141.5M863.0 121.1V136.0M867.8 122.0V132.6M869.4 119.7V122.8M882.0 146.0V150.3M883.6 140.9V146.8M893.1 152.4V156.7M894.6 150.8V153.2M899.4 147.7V152.8M901.0 144.3V148.5M905.7 145.8V148.8M907.3 144.2V146.6M908.9 141.7V145.0M912.0 139.2V144.8M915.2 138.1V140.1M927.8 157.8V160.0M943.6 170.9V178.0M948.4 173.3V176.3M949.9 172.1V174.1M953.1 169.4V174.2M954.7 168.4V170.2M961.0 179.5V181.5M962.6 173.1V180.3M964.2 169.7V173.9M965.7 168.7V170.5M976.8 173.8V177.8M980.0 173.4V175.7M981.5 172.1V174.2M984.7 169.4V173.3M986.3 167.5V170.2M987.9 164.2V168.3M991.0 163.2V165.5M995.8 162.7V165.4M997.3 159.2V163.5M1000.5 156.1V160.1M1002.1 152.8V156.9M1006.8 160.8V163.1M1011.6 162.9V166.4M1013.1 160.1V163.7M1014.7 158.7V160.9M1016.3 156.3V159.5M1019.5 154.8V157.5M1024.2 157.5V159.2M1027.4 156.9V160.3M1028.9 146.9V157.7M1030.5 140.0V147.7M1032.1 137.4V140.8M1036.8 144.6V146.0M1054.2 179.5V188.7M1057.4 177.2V180.9M1059.0 175.8V178.0M1060.5 170.2V176.6M1063.7 168.3V171.5M1073.2 172.3V174.3M1076.3 168.9V172.6M1077.9 167.2V169.7M1079.5 162.0V168.0M1081.1 161.1V162.8M1085.8 161.5V163.6M1180.6 167.5V169.0M1183.8 166.8V170.8M1185.4 165.1V167.6M1193.3 169.9V171.5M1196.4 171.2V174.4M1205.9 210.8V216.7M1207.5 197.4V211.6M1209.1 196.5V198.2M1210.6 189.2V197.3M1213.8 188.1V190.5M1215.4 186.4V188.9M1217.0 185.1V187.2M1220.1 182.1V186.2M1221.7 177.1V182.9M1235.9 209.6V211.7M1237.5 205.9V210.4M1239.1 203.5V206.7M1242.2 206.1V207.8M1245.4 203.5V206.6M1254.9 212.5V220.2M1259.6 226.3V238.5M1261.2 217.4V227.1M1267.5 208.0V226.3M1273.8 217.6V219.4M1280.2 214.1V223.9M1281.7 206.8V214.9M1283.3 205.4V207.6M1284.9 204.1V206.2M1296.0 210.6V212.6M1297.5 205.9V211.4M1300.7 205.6V207.6M1302.3 202.8V206.4M1303.9 200.8V203.6M1305.4 200.0V201.6M1310.2 197.0V204.7M1314.9 205.9V207.8M1316.5 201.8V206.7M1318.1 197.3V202.6M1326.0 236.4V253.1M1327.6 221.4V237.2M1343.4 270.2V281.6M1344.9 259.5V271.0M1346.5 253.0V260.3M1357.6 302.7V314.0M1359.2 292.9V303.5M1360.7 290.6V293.7M1365.5 296.9V302.3M1367.1 289.4V297.7M1368.6 277.9V290.2M1370.2 272.8V278.7M1379.7 337.8V353.1M1381.3 326.7V338.6M1382.9 325.8V327.5M1384.4 317.8V326.6M1389.2 303.9V332.0M1390.8 290.9V304.7M1392.3 288.3V291.7M1398.7 293.0V296.1M1403.4 297.2V301.1M1405.0 288.9V298.0M1406.6 282.7V289.7M1411.3 288.6V307.4M1414.5 284.1V299.8M1416.0 259.3V284.9M1419.2 246.6V260.0M1420.8 243.3V247.4M1422.4 239.1V244.1M1423.9 236.2V239.9M1425.5 233.6V237.0M1431.8 246.0V248.8M1433.4 242.9V246.8M1435.0 242.2V243.7M1436.6 239.9V243.0M1447.6 269.2V273.2M1455.5 283.7V287.3M1457.1 267.9V284.5M1458.7 254.6V268.7M1460.3 250.3V255.4M1463.4 247.1V257.7M1465.0 243.7V247.9M1468.2 250.1V255.5M1469.8 249.0V250.9M1472.9 247.9V250.6M1474.5 241.3V248.7M1476.1 239.7V242.1M1477.7 237.2V240.5M1480.8 232.6V238.1M1484.0 232.9V234.8M1485.6 227.6V233.7M1487.1 225.1V228.4M1488.7 221.2V225.9M1490.3 212.9V222.0M1502.9 248.2V250.6M1504.5 239.9V249.0M1506.1 233.6V240.7M1509.3 226.4V235.8M1510.8 224.5V227.2M1512.4 219.9V225.3M1515.6 212.4V222.0M1517.2 208.0V213.2M1518.7 203.4V208.8M1531.4 218.2V220.8M1539.3 233.8V238.1M1544.0 239.9V241.7M1545.6 236.4V240.7M1548.8 234.0V236.9M1550.3 232.2V234.8M1567.7 250.3V252.9M1570.9 253.6V255.9M1575.6 260.3V266.7M1577.2 259.4V261.1M1578.8 245.0V260.2M1580.4 242.0V245.8M1583.5 232.1V243.7M1593.0 255.1V257.3M1600.9 273.7V276.1M1604.1 279.4V287.6M1605.6 271.1V280.2M1607.2 268.7V271.9M1608.8 265.7V269.5" stroke="#ff0000" stroke-width="1.8" fill="none"/><path d="M1087.4 155.4V162.7M1092.1 153.4V161.5M1093.7 152.4V155.2M1100.0 158.5V161.2M1103.2 158.2V161.9M1106.4 156.9V160.1M1114.3 163.6V171.6M1120.6 166.9V171.3M1125.3 166.5V170.6M1126.9 165.3V168.3M1130.1 166.0V169.4M1136.4 174.3V179.3M1139.5 174.1V178.0M1141.1 171.4V175.9M1145.9 162.9V167.1M1149.0 163.6V169.2M1152.2 161.6V166.0M1153.8 158.6V163.4M1161.7 165.9V168.8M1163.2 164.4V167.7M1166.4 166.4V169.2M1168.0 160.6V168.2M1172.7 160.6V164.5M1613.5 254.0V266.0M1615.1 250.9V255.8M1623.0 235.3V244.2M1624.6 230.9V237.1M1629.3 225.9V233.7M1634.1 217.0V222.6M1635.7 213.3V218.8M1638.8 213.5V217.5M1640.4 209.4V215.3M1645.1 199.9V214.9M1649.9 199.7V204.7M1657.8 209.0V212.3M1667.3 208.5V212.5M1668.8 205.5V210.3M1679.9 208.5V212.5M1686.2 210.9V216.5M1692.5 197.2V210.3M1697.3 196.6V199.6M1698.9 195.7V198.4M1700.4 189.3V197.5M1702.0 186.7V191.1M1703.6 181.9V188.5M1711.5 182.3V189.9M1714.7 187.9V190.5M1722.6 189.0V192.0M1727.3 198.7V201.9M1732.0 203.9V208.2M1739.9 203.2V211.2M1743.1 202.2V207.2M1747.8 202.2V206.1M1765.2 201.3V205.0M1771.5 200.5V203.8M1779.4 205.2V210.6M1790.5 212.3V220.7M1793.7 212.5V217.5M1795.2 210.1V214.3M1807.9 221.8V233.3M1814.2 221.7V226.7M1818.9 217.5V224.3M1822.1 220.2V222.9M1825.3 218.6V222.1M1828.4 213.4V220.1M1836.3 214.5V217.9M1839.5 216.8V219.9M1850.5 215.0V223.9M1853.7 204.4V223.7M1855.3 200.7V206.2M1856.9 199.2V202.5M1858.4 186.0V201.0M1863.2 184.2V190.4M1864.8 178.1V186.0M1871.1 179.7V186.2M1872.7 177.6V181.5M1885.3 177.1V181.2M1888.5 172.4V179.2M1891.6 173.6V177.2" stroke="#ff0000" stroke-width="2.2" fill="none"/><path d="M15.6 186.9h2.6M25.1 190.6h2.6M37.7 185.2h2.6M47.2 174.4h2.6M48.8 174.1h2.6M53.5 164.6h2.6M55.1 165.0h2.6M64.6 172.5h2.6M74.0 166.7h2.6M80.4 151.7h2.6M91.4 147.0h2.6M97.7 149.6h2.6M99.3 149.6h2.6M100.9 149.3h2.6M116.7 141.2h2.6M126.2 131.7h2.6M129.3 130.7h2.6M130.9 130.7h2.6M137.2 137.8h2.6M143.6 129.3h2.6M175.2 104.3h2.6M189.5 134.8h2.6M202.1 119.6h2.6M219.5 107.7h2.6M222.6 120.8h2.6M252.7 111.4h2.6M254.2 110.9h2.6M259.0 111.7h2.6M289.0 160.6h2.6M344.3 228.4h2.6M345.9 229.0h2.6M356.9 246.2h2.6M379.1 232.2h2.6M391.7 232.9h2.6M409.1 230.8h2.6M429.6 194.4h2.6M431.2 195.0h2.6M432.8 194.5h2.6M434.4 194.4h2.6M458.1 202.3h2.6M478.6 191.4h2.6M480.2 191.9h2.6M492.8 184.4h2.6M497.6 191.5h2.6M510.2 205.1h2.6M511.8 205.5h2.6M521.3 191.6h2.6M522.8 191.1h2.6M545.0 227.3h2.6M546.5 227.6h2.6M552.9 235.9h2.6M559.2 268.5h2.6M579.7 245.8h2.6M587.6 238.7h2.6M589.2 239.1h2.6M606.6 242.2h2.6M608.2 242.2h2.6M616.1 246.7h2.6M619.2 242.1h2.6M631.9 241.6h2.6M641.3 246.8h2.6M647.7 250.0h2.6M652.4 255.2h2.6M657.1 245.2h2.6M682.4 243.1h2.6M688.7 241.5h2.6M695.1 251.6h2.6M712.4 246.5h2.6M740.9 218.1h2.6M758.3 222.2h2.6M783.5 239.6h2.6M841.3 166.6h2.6M896.6 152.0h2.6M912.4 139.3h2.6M915.6 137.8h2.6M928.2 157.2h2.6M929.8 156.8h2.6M934.5 161.6h2.6M937.7 167.6h2.6M966.1 168.9h2.6M967.7 168.4h2.6M974.0 177.0h2.6M981.9 172.5h2.6M988.2 164.7h2.6M991.4 163.8h2.6M997.7 159.3h2.6M1016.7 156.7h2.6M1051.4 187.9h2.6M1054.6 180.1h2.6M1060.9 170.7h2.6M1068.8 172.7h2.6M1073.6 171.8h2.6M1083.0 162.8h2.6M1185.7 164.9h2.6M1188.9 168.6h2.6M1211.0 189.7h2.6M1217.3 185.4h2.6M1230.0 202.8h2.6M1242.6 205.8h2.6M1247.4 207.5h2.6M1267.9 208.3h2.6M1274.2 217.6h2.6M1275.8 218.0h2.6M1285.3 203.9h2.6M1286.9 204.5h2.6M1327.9 221.6h2.6M1399.0 293.5h2.6M1416.4 259.2h2.6M1425.9 233.1h2.6M1429.1 248.0h2.6M1441.7 258.3h2.6M1448.0 269.5h2.6M1478.0 237.3h2.6M1528.6 220.0h2.6M1541.2 240.9h2.6M1546.0 236.1h2.6M1550.7 232.4h2.6M1555.5 240.7h2.6M1561.8 249.9h2.6M1563.4 249.6h2.6M1583.9 232.3h2.6" stroke="#ffff66" stroke-width="1.8" fill="none"/><path d="M1095.4 153.3h3M1103.3 158.9h3M1115.9 169.5h3M1117.5 170.1h3M1122.2 169.4h3M1149.1 164.8h3M1158.6 167.6h3M1169.6 163.3h3M1172.8 161.9h3M1177.5 168.2h3M1618.4 241.7h3M1624.7 231.1h3M1631.0 221.4h3M1653.1 209.7h3M1657.9 209.3h3M1664.2 211.3h3M1672.1 205.1h3M1681.6 212.2h3M1706.8 183.8h3M1716.3 190.5h3M1727.4 199.6h3M1749.5 212.0h3M1757.4 199.7h3M1781.1 207.6h3M1804.8 232.1h3M1815.9 223.1h3M1822.2 220.9h3M1825.3 218.9h3M1828.5 214.5h3M1830.1 213.9h3M1845.9 231.4h3M1858.5 187.2h3M1864.8 179.2h3M1872.7 178.4h3M1891.7 174.9h3M1894.9 181.7h3" stroke="#ffff66" stroke-width="2.2" fill="none"/><path d="M1902 228.2h4" stroke="#ffff66" stroke-width="2.4"/></g>
<path d="M10.2 372.5V75.7H1907.2V371.5" stroke="#f4f4f4" stroke-width="2" fill="none"/>
<path d="M9.2 371.5H1908.2" stroke="#f4f4f4" stroke-width="2.2" fill="none"/>
<text class="cj" x="11.10" y="97.10" fill="#d2d2d2">時刻</text>
<text class="la" transform="translate(50.19,97.10) scale(1,1.56)" fill="#d2d2d2">:06:00</text>
<text class="cj" x="116.92" y="97.10" fill="#d2d2d2">始値</text>
<text class="la" transform="translate(156.01,97.10) scale(1,1.56)" fill="#d2d2d2">:26,570</text>
<text class="cj" x="232.36" y="97.10" fill="#d2d2d2">高値</text>
<text class="la" transform="translate(271.45,97.10) scale(1,1.56)" fill="#d2d2d2">:26,570</text>
<text class="cj" x="347.80" y="97.10" fill="#d2d2d2">安値</text>
<text class="la" transform="translate(386.89,97.10) scale(1,1.56)" fill="#d2d2d2">:26,570</text>
<text class="cj" x="463.24" y="97.10" fill="#d2d2d2">終値</text>
<text class="la" transform="translate(502.33,97.10) scale(1,1.56)" fill="#d2d2d2">:26,570</text>
<g clip-path="url(#ca0)">
<text class="la" transform="translate(1908.91,99.10) scale(1,1.56)" fill="#d2d2d2">26,800</text>
<text class="la" transform="translate(1908.91,153.50) scale(1,1.56)" fill="#d2d2d2">26,700</text>
<text class="la" transform="translate(1908.91,207.90) scale(1,1.56)" fill="#d2d2d2">26,600</text>
<text class="la" transform="translate(1908.91,262.30) scale(1,1.56)" fill="#d2d2d2">26,500</text>
<text class="la" transform="translate(1908.91,316.70) scale(1,1.56)" fill="#d2d2d2">26,400</text>
<text class="la" transform="translate(1908.91,371.10) scale(1,1.56)" fill="#d2d2d2">26,300</text>
</g>
<rect x="1908.0" y="211.0" width="89.79999999999995" height="34.4" fill="#d6d6d6"/>
<text class="la" transform="translate(1923.61,235.40) scale(1,1.56)" fill="#000" font-weight="bold">26,570</text>
<text class="la" transform="translate(74.11,387.30) scale(1,1.56)" fill="#d2d2d2">05</text>
<text class="la" transform="translate(128.41,387.30) scale(1,1.56)" fill="#ffffff" font-weight="bold">06</text>
<text class="la" transform="translate(178.71,387.30) scale(1,1.56)" fill="#d2d2d2">09</text>
<text class="la" transform="translate(274.11,387.30) scale(1,1.56)" fill="#d2d2d2">10</text>
<text class="la" transform="translate(367.91,387.30) scale(1,1.56)" fill="#d2d2d2">11</text>
<text class="la" transform="translate(462.91,387.30) scale(1,1.56)" fill="#d2d2d2">12</text>
<text class="la" transform="translate(557.01,387.30) scale(1,1.56)" fill="#d2d2d2">13</text>
<text class="la" transform="translate(650.71,387.30) scale(1,1.56)" fill="#d2d2d2">14</text>
<text class="la" transform="translate(745.71,387.30) scale(1,1.56)" fill="#d2d2d2">15</text>
<text class="la" transform="translate(809.81,387.30) scale(1,1.56)" fill="#d2d2d2">17</text>
<text class="la" transform="translate(905.21,387.30) scale(1,1.56)" fill="#d2d2d2">18</text>
<text class="la" transform="translate(996.01,387.30) scale(1,1.56)" fill="#d2d2d2">19</text>
<text class="la" transform="translate(1087.81,387.30) scale(1,1.56)" fill="#d2d2d2">20</text>
<text class="la" transform="translate(1175.51,387.30) scale(1,1.56)" fill="#d2d2d2">21</text>
<text class="la" transform="translate(1267.51,387.30) scale(1,1.56)" fill="#d2d2d2">22</text>
<text class="la" transform="translate(1358.41,387.30) scale(1,1.56)" fill="#d2d2d2">23</text>
<text class="la" transform="translate(1450.41,387.30) scale(1,1.56)" fill="#d2d2d2">00</text>
<text class="la" transform="translate(1533.11,387.30) scale(1,1.56)" fill="#d2d2d2">01</text>
<text class="la" transform="translate(1614.41,387.30) scale(1,1.56)" fill="#d2d2d2">02</text>
<text class="la" transform="translate(1697.21,387.30) scale(1,1.56)" fill="#d2d2d2">03</text>
<text class="la" transform="translate(1771.91,387.30) scale(1,1.56)" fill="#d2d2d2">04</text>
<text class="la" transform="translate(1836.21,387.30) scale(1,1.56)" fill="#d2d2d2">05</text>
<text class="la" transform="translate(1877.41,387.30) scale(1,1.56)" fill="#d2d2d2">06</text>
<text class="la" transform="translate(1450.21,362.90) scale(1,1.56)" fill="#d2d2d2">25</text>
<rect x="9" y="402.7" width="1988" height="288.0" fill="#1a1a1a"/>
<rect x="10.2" y="404.5" width="1897.0" height="261.8" fill="#000"/>
<clipPath id="cp1"><rect x="11.2" y="405.5" width="1895.0" height="259.8"/></clipPath>
<clipPath id="ca1"><rect x="9" y="403.5" width="1988" height="287.2"/></clipPath>
<path d="M11.2 446.4H1906.2M11.2 498.0H1906.2M11.2 549.6H1906.2M11.2 601.2H1906.2M11.2 652.7H1906.2M72.6 405.0V666.3M177.2 405.0V666.3M272.6 405.0V666.3M366.4 405.0V666.3M461.4 405.0V666.3M555.5 405.0V666.3M649.2 405.0V666.3M744.2 405.0V666.3M808.3 405.0V666.3M903.7 405.0V666.3M994.5 405.0V666.3M1086.3 405.0V666.3M1174.0 405.0V666.3M1266.0 405.0V666.3M1356.9 405.0V666.3M1448.9 405.0V666.3M1531.6 405.0V666.3M1612.9 405.0V666.3M1695.7 405.0V666.3M1770.4 405.0V666.3M1834.7 405.0V666.3M1902.2 405.0V666.3" stroke="#e0e0e0" stroke-width="1.5" stroke-dasharray="1.45 1.65" fill="none" opacity="0.84"/>
<path d="M153.4 405.0V666.3" stroke="#e0e0e0" stroke-width="3.2" stroke-dasharray="1.45 1.65" fill="none" opacity="0.92"/>
<g clip-path="url(#cp1)"><path d="M154.0 498.3V512.9M158.7 500.9V507.0M165.0 490.9V500.8M166.6 494.4V507.4M168.2 503.7V519.0M169.8 518.2V522.1M174.5 502.9V518.0M176.1 512.7V521.8M181.8 522.6V543.4M184.9 531.3V535.3M195.1 542.4V559.2M199.8 549.4V553.0M201.4 551.7V557.2M210.9 530.9V539.3M212.5 537.1V549.0M215.6 544.2V552.1M220.4 536.9V550.2M226.7 539.9V549.1M272.0 502.5V519.7M273.6 514.1V566.8M275.2 528.2V550.2M276.7 546.5V575.1M283.1 552.8V592.6M284.6 578.6V589.7M289.4 573.0V586.4M291.0 575.8V589.8M292.5 585.5V597.8M294.1 591.9V601.8M295.7 598.2V604.1M297.3 597.3V613.0M298.9 605.2V652.9M300.4 624.5V637.8M305.2 611.1V618.9M308.3 603.1V618.3M309.9 613.6V627.6M311.5 622.6V634.7M313.1 632.8V639.2" stroke="#0a84ff" stroke-width="1.1" fill="none"/><path d="M152.4 498.2V499.9M155.5 504.1V509.4M157.1 497.3V504.4M160.3 501.6V507.4M161.9 494.9V505.2M163.4 491.4V498.2M171.3 505.4V520.4M172.9 498.4V509.8M180.2 523.4V525.3M183.4 530.1V543.2M193.5 541.4V544.2M196.7 545.4V556.3M198.2 549.2V551.6M203.0 545.8V556.9M204.6 540.4V550.7M206.1 541.2V543.7M209.3 530.4V542.7M214.0 538.1V547.6M217.2 546.3V558.3M218.8 533.2V549.9M221.9 544.4V549.8M223.5 541.8V546.2M225.1 540.1V542.9M270.4 499.4V512.8M278.3 554.1V570.7M279.9 558.4V560.9M281.5 552.7V560.0M286.2 580.2V590.5M287.8 573.6V581.6M302.0 614.6V639.0M303.6 604.4V623.6M306.8 600.3V617.5M314.7 621.2V638.4M316.2 617.3V626.6M317.8 614.0V621.3M319.4 607.9V615.2M321.0 604.7V610.3" stroke="#ff0000" stroke-width="1.1" fill="none"/><path d="M154.0 498.4V508.7M158.7 502.1V507.1M165.0 491.4V496.0M166.6 495.2V505.3M168.2 504.5V519.1M169.8 518.3V520.5M174.5 503.8V515.7M176.1 514.9V516.9M181.8 523.9V542.9M184.9 532.8V534.6M195.1 543.1V556.9M199.8 550.3V552.9M201.4 552.1V556.4M210.9 531.1V538.5M212.5 537.7V546.5M215.6 545.1V552.2M220.4 537.6V550.2M226.7 540.9V547.8M272.0 504.2V519.3M273.6 518.5V535.4M275.2 534.6V549.3M276.7 548.5V569.7M283.1 553.9V582.5M284.6 581.7V590.1M289.4 574.1V581.9M291.0 581.1V587.1M292.5 586.3V593.0M294.1 592.2V600.8M295.7 600.0V604.2M297.3 603.4V608.2M298.9 607.4V635.1M300.4 634.3V638.5M305.2 611.8V616.8M308.3 604.9V615.7M309.9 614.9V625.0M311.5 624.2V634.0M313.1 633.2V637.9" stroke="#0a84ff" stroke-width="1.8" fill="none"/><path d="M152.4 498.4V500.1M155.5 504.2V508.7M157.1 502.1V505.0M160.3 504.2V507.1M161.9 498.0V505.0M163.4 491.4V498.8M171.3 507.5V520.5M172.9 503.8V508.3M180.2 523.9V525.5M183.4 532.8V542.9M193.5 543.1V544.9M196.7 551.5V556.9M198.2 550.3V552.3M203.0 548.5V556.4M204.6 543.1V549.3M206.1 541.6V543.9M209.3 531.1V542.9M214.0 545.1V546.5M217.2 547.1V552.2M218.8 537.6V547.9M221.9 545.4V550.2M223.5 542.7V546.2M225.1 540.9V543.5M270.4 504.2V507.4M278.3 559.4V569.7M279.9 558.5V560.2M281.5 553.9V559.3M286.2 581.3V590.1M287.8 574.1V582.1M302.0 616.0V638.5M303.6 611.8V616.8M306.8 604.9V616.8M314.7 625.7V637.9M316.2 621.2V626.5M317.8 614.2V622.0M319.4 608.7V615.0M321.0 606.8V609.5" stroke="#ff0000" stroke-width="1.8" fill="none"/><path d="M206.5 542.1h2.6" stroke="#ffff66" stroke-width="1.8" fill="none"/><path d="M150.3 516.7h2.2M235.8 530.8V536.8M266.2 517.5h2.2M334.3 613.0V631.2M356.6 609.4V617.9M360.0 617.9V626.3M361.6 611.8h2.2M386.8 574.3V584.0M392.9 565.9V588.8M395.3 569.5V574.3M403.8 579.2V587.6M409.8 571.9V575.5M421.9 569.5V573.1M449.0 547.7V559.8M461.8 551.3V556.2M483.6 552.5V562.2M491.6 555.0V559.8M515.0 561.0V567.1M528.8 553.8V559.8M530.9 563.4h2.2M547.7 539.2V545.3M569.5 539.2V544.1M603.8 528.8V535.6M614.2 540.5V548.9M630.0 548.2h2.2M649.4 541.7h2.2M671.2 529.6h2.2M678.3 516.3V518.7M680.6 523.5V528.4M686.7 527.9h2.2M695.2 532.0h2.2M697.5 536.8V544.1M702.9 542.1h2.2M727.2 529.6V533.2M779.5 528.4V533.2M790.7 531.3h2.2M803.9 524.0V536.8M810.8 480.5h2.2M814.8 480.5V496.9M819.2 496.4V509.5M836.7 496.9h2.2M849.1 486.8V500.5M906.8 488.4h2.2M910.5 490.9h2.2M926.2 487.7h2.2M937.7 481.9V488.4M939.5 492.1h2.2M952.8 493.3h2.2M957.5 494.0V503.0M960.0 495.0h2.2M963.2 495.7h2.2M1056.1 491.6h2.2M1138.0 490.9V498.1M1151.4 495.7h2.2M1202.9 498.1V503.0M1203.2 505.9h2.2M1215.8 482.4h2.2M1222.3 475.1h2.2M1224.7 474.7h2.2M1241.6 470.3V472.7M1250.7 465.5V469.8M1265.3 447.3V451.4M1271.8 431.6V443.7M1284.6 420.0V423.1M1289.9 415.9V421.9M1291.2 424.4h2.2M1294.9 429.2h2.2M1302.9 423.1h2.2M1305.7 425.6V431.6M1308.8 441.3V449.7M1317.7 466.7V471.5M1319.4 478.8V483.6M1320.9 488.4V496.9M1323.8 501.8V521.1M1331.1 515.1V519.9M1333.5 525.9V529.6M1337.8 525.9V529.6M1350.2 524.7V528.4M1355.1 528.4V540.5M1358.7 538.0V545.3M1373.6 533.7h2.2M1377.6 538.0V559.8M1378.2 562.7h2.2M1381.3 567.5h2.2M1386.5 557.4V561.0M1396.9 564.6V576.7M1407.6 575.5V593.7M1454.4 499.8h2.2M1497.9 480.7h2.2M1608.7 524.2h2.2M1695.6 452.7h2.2M1893.9 452.7h2.2" stroke="#0a84ff" stroke-width="2" fill="none"/><path d="M99.3 543.4h2.2M105.3 543.4h2.2M110.1 535.6V539.2M116.2 527.9h2.2M119.1 524.2h2.2M231.6 538.0h2.2M240.8 536.8h2.2M246.8 528.4h2.2M250.3 522.3V525.9M252.8 515.1V521.1M258.9 506.1h2.2M270.4 506.6V511.4M329.0 603.3V610.6M336.7 610.6V625.1M337.5 613.0h2.2M343.5 597.3V604.6M331.2 602.1V610.6M353.7 597.3V615.4M358.5 608.2V619.1M366.8 605.8V610.6M372.4 594.9h2.2M376.8 592.5h2.2M380.2 591.2h2.2M388.5 571.9V576.7M426.8 563.4V575.5M440.8 558.6V564.6M442.5 551.3V556.2M446.1 548.9V551.3M510.2 552.5V559.8M534.5 553.0h2.2M540.4 542.9V548.9M542.9 541.7V545.3M545.4 537.6h2.2M563.4 538.0V546.5M570.8 538.8h2.2M579.9 541.7V550.1M581.6 533.2V539.2M588.9 532.0h2.2M594.9 528.4V532.0M616.7 539.2h2.2M644.0 541.7V545.3M645.7 535.6V542.9M668.7 532.7h2.2M675.4 523.5V527.1M674.6 525.5h2.2M683.0 511.4V525.9M706.1 543.4h2.2M723.7 532.7h2.2M736.2 523.5V534.4M737.9 524.7V530.8M742.3 527.1h2.2M754.3 516.3V522.3M776.6 523.0V532.7M782.7 523.0h2.2M801.5 535.6V539.2M810.0 473.9V498.1M816.1 496.9h2.2M821.6 494.5V501.3M823.4 484.1h2.2M833.5 494.0h2.2M845.0 497.4V501.8M850.0 496.9h2.2M853.5 501.8V511.4M857.2 502.5h2.2M873.0 495.0h2.2M896.6 496.9V504.7M902.7 489.7h2.2M906.2 484.3V488.4M929.8 489.2h2.2M933.8 489.7V493.3M946.3 494.5h2.2M997.3 476.4V480.0M1032.4 477.6h2.2M1174.3 480.0V489.2M1179.5 480.7h2.2M1207.7 486.0V495.7M1212.0 472.2V481.2M1233.2 473.2h2.2M1237.9 466.7V471.5M1247.2 463.1h2.2M1257.3 459.4V464.3M1263.3 446.1V452.2M1268.2 435.2V441.3M1274.3 440.1h2.2M1277.8 428.0V435.2M1287.0 421.9V426.8M1296.6 428.0h2.2M1326.9 513.8V523.5M1343.1 521.6h2.2M1344.8 506.6h2.2M1347.9 510.2h2.2M1356.8 533.2V546.5M1359.5 541.7h2.2M1383.4 559.8V564.6M1388.9 556.2V559.8M1403.1 557.9h2.2M1409.6 581.6h2.2M1424.5 515.1V529.6M1426.5 501.8h2.2M1434.5 497.4h2.2M1437.4 484.1h2.2M1458.7 487.2h2.2M1463.5 473.5h2.2M1470.8 474.7h2.2M1517.2 472.2h2.2M1531.3 469.8h2.2M1545.1 455.8h2.2M1625.6 490.1h2.2M1649.3 471.5h2.2M1693.6 457.5h2.2M1704.5 446.6h2.2M1751.7 443.2h2.2" stroke="#ff0000" stroke-width="2" fill="none"/><path d="M70.0 552.5h2.8M76.0 555.4h2.8M112.3 532.7h2.8M137.7 521.6h2.8M148.6 518.2h2.8M177.8 511.4V518.7M189.7 530.8h2.8M199.4 557.4h2.8M197.1 546.5V551.3M228.4 540.5h2.8M237.6 539.2h2.8M243.4 535.6h2.8M253.8 511.4h2.8M256.2 509.0h2.8M261.0 511.4h2.8M263.5 516.3h2.8M323.9 602.1h2.8M330.5 603.3h2.8M339.7 604.6h2.8M344.5 605.8h2.8M346.9 611.8h2.8M338.3 604.6h2.8M344.3 608.2h2.8M364.4 615.4h2.8M367.3 603.3h2.8M370.2 598.5h2.8M383.7 590.0h2.8M389.1 566.6h2.8M395.8 573.1h2.8M398.3 577.2h2.8M412.0 574.3h2.8M416.9 575.5h2.8M422.4 571.9h2.8M433.1 571.4h2.8M437.4 570.2h2.8M436.2 563.4h2.8M450.7 550.1h2.8M452.4 556.2h2.8M456.3 549.6h2.8M464.1 556.2h2.8M467.7 559.8h2.8M473.2 550.1h2.8M472.5 548.2h2.8M487.0 548.2h2.8M493.1 559.8h2.8M499.1 550.1h2.8M502.8 553.8h2.8M518.5 556.2h2.8M520.2 559.3h2.8M536.6 552.1h2.8M548.7 542.9h2.8M551.1 547.7h2.8M554.8 548.9h2.8M559.6 551.3h2.8M575.3 544.1h2.8M583.8 533.2h2.8M597.1 527.9h2.8M603.1 540.5h2.8M624.9 548.9h2.8M632.9 541.7h2.8M638.2 535.6h2.8M652.2 543.4h2.8M661.9 538.5h2.8M672.6 530.1h2.8M675.5 516.7h2.8M689.6 524.7h2.8M692.0 530.3h2.8M699.7 541.7h2.8M708.2 542.9h2.8M721.0 540.0h2.8M728.7 529.6h2.8M731.2 527.1h2.8M738.9 523.5h2.8M745.2 525.9h2.8M743.7 529.6h2.8M756.6 515.1h2.8M761.4 511.9h2.8M757.8 521.1h2.8M762.6 524.0h2.8M766.2 521.8h2.8M768.7 521.8h2.8M784.4 529.6h2.8M789.2 538.5h2.8M793.6 525.9h2.8M792.8 534.4h2.8M797.0 530.8h2.8M806.6 529.6V538.0M806.1 541.7h2.8M825.5 488.4h2.8M827.9 492.1h2.8M830.3 496.4h2.8M861.8 507.3h2.8M868.6 496.9h2.8M877.5 491.6h2.8M883.5 490.1h2.8M880.6 501.3h2.8M887.2 499.3h2.8M889.6 501.3h2.8M907.7 489.7h2.8M913.8 487.2h2.8M921.0 487.2h2.8M943.5 490.1h2.8M946.9 495.0h2.8M969.4 498.1h2.8M975.5 490.1h2.8M979.1 488.9h2.8M983.2 488.4h2.8M987.6 485.3h2.8M1000.7 477.6h2.8M1004.3 484.1h2.8M1008.4 483.6h2.8M1012.8 483.9h2.8M1022.5 479.3h2.8M1027.3 479.3h2.8M1030.9 478.8h2.8M1039.4 480.7h2.8M1046.7 491.6h2.8M1048.6 495.0h2.8M1062.4 495.0h2.8M1072.0 497.6h2.8M1131.8 490.1h2.8M1144.6 495.0h2.8M1152.6 495.0h2.8M1160.3 490.1h2.8M1183.6 480.7h2.8M1191.3 496.9h2.8M1219.6 481.2h2.8M1226.9 473.5h2.8M1226.9 479.3h2.8M1243.8 469.8h2.8M1280.1 426.3h2.8M1297.7 423.1h2.8M1310.3 446.1h2.8M1308.4 454.6h2.8M1339.9 528.8h2.8M1341.6 524.7h2.8M1350.8 530.8h2.8M1362.6 538.5h2.8M1368.7 530.8h2.8M1371.8 535.1h2.8M1374.2 537.6h2.8M1388.7 552.5h2.8M1397.2 557.9h2.8M1404.5 572.6h2.8M1408.6 577.9h2.8M1412.4 565.1h2.8M1424.5 510.7h2.8M1429.4 513.8h2.8M1432.8 509.0h2.8M1452.8 500.5h2.8M1464.9 479.3h2.8M1473.4 483.9h2.8M1481.9 474.7h2.8M1485.0 474.7h2.8M1492.8 469.8h2.8M1527.1 478.8h2.8M1562.4 482.4h2.8M1566.8 487.2h2.8M1571.4 501.0h2.8M1574.5 504.2h2.8M1573.1 509.0h2.8M1578.6 498.1h2.8M1593.6 513.8h2.8M1597.2 524.2h2.8M1605.2 513.8h2.8M1630.1 479.3h2.8M1631.8 473.2h2.8M1635.0 477.6h2.8M1652.4 457.5h2.8M1698.4 454.1h2.8M1734.0 447.8h2.8M1873.0 452.7h2.8" stroke="#ffff66" stroke-width="1.7" fill="none"/><path d="M1900.6 447v9.5" stroke="#ff0000" stroke-width="3.2"/></g>
<path d="M10.2 667.3V403.7H1907.2V666.3" stroke="#f4f4f4" stroke-width="2" fill="none"/>
<path d="M9.2 666.3H1908.2" stroke="#f4f4f4" stroke-width="2.2" fill="none"/>
<text class="cj" x="11.10" y="425.10" fill="#d2d2d2">時刻</text>
<text class="la" transform="translate(50.19,425.10) scale(1,1.56)" fill="#d2d2d2">:06:00</text>
<text class="cj" x="116.92" y="425.10" fill="#d2d2d2">始値</text>
<text class="la" transform="translate(156.01,425.10) scale(1,1.56)" fill="#d2d2d2">:---</text>
<text class="cj" x="203.50" y="425.10" fill="#d2d2d2">高値</text>
<text class="la" transform="translate(242.59,425.10) scale(1,1.56)" fill="#d2d2d2">:---</text>
<text class="cj" x="290.08" y="425.10" fill="#d2d2d2">安値</text>
<text class="la" transform="translate(329.17,425.10) scale(1,1.56)" fill="#d2d2d2">:---</text>
<text class="cj" x="376.66" y="425.10" fill="#d2d2d2">終値</text>
<text class="la" transform="translate(415.75,425.10) scale(1,1.56)" fill="#d2d2d2">:---</text>
<g clip-path="url(#ca1)">
<text class="la" transform="translate(1908.91,442.50) scale(1,1.56)" fill="#d2d2d2">10,700</text>
<text class="la" transform="translate(1908.91,494.10) scale(1,1.56)" fill="#d2d2d2">10,600</text>
<text class="la" transform="translate(1908.91,545.70) scale(1,1.56)" fill="#d2d2d2">10,500</text>
<text class="la" transform="translate(1908.91,597.30) scale(1,1.56)" fill="#d2d2d2">10,400</text>
<text class="la" transform="translate(1908.91,648.90) scale(1,1.56)" fill="#d2d2d2">10,300</text>
<text class="la" transform="translate(1908.91,700.50) scale(1,1.56)" fill="#d2d2d2">10,200</text>
</g>
<rect x="1908.0" y="430.2" width="89.79999999999995" height="34.4" fill="#d6d6d6"/>
<text class="la" transform="translate(1923.61,454.60) scale(1,1.56)" fill="#000" font-weight="bold">10,699</text>
<text class="la" transform="translate(74.11,682.10) scale(1,1.56)" fill="#d2d2d2">05</text>
<text class="la" transform="translate(128.41,682.10) scale(1,1.56)" fill="#ffffff" font-weight="bold">06</text>
<text class="la" transform="translate(178.71,682.10) scale(1,1.56)" fill="#d2d2d2">09</text>
<text class="la" transform="translate(274.11,682.10) scale(1,1.56)" fill="#d2d2d2">10</text>
<text class="la" transform="translate(367.91,682.10) scale(1,1.56)" fill="#d2d2d2">11</text>
<text class="la" transform="translate(462.91,682.10) scale(1,1.56)" fill="#d2d2d2">12</text>
<text class="la" transform="translate(557.01,682.10) scale(1,1.56)" fill="#d2d2d2">13</text>
<text class="la" transform="translate(650.71,682.10) scale(1,1.56)" fill="#d2d2d2">14</text>
<text class="la" transform="translate(745.71,682.10) scale(1,1.56)" fill="#d2d2d2">15</text>
<text class="la" transform="translate(809.81,682.10) scale(1,1.56)" fill="#d2d2d2">17</text>
<text class="la" transform="translate(905.21,682.10) scale(1,1.56)" fill="#d2d2d2">18</text>
<text class="la" transform="translate(996.01,682.10) scale(1,1.56)" fill="#d2d2d2">19</text>
<text class="la" transform="translate(1087.81,682.10) scale(1,1.56)" fill="#d2d2d2">20</text>
<text class="la" transform="translate(1175.51,682.10) scale(1,1.56)" fill="#d2d2d2">21</text>
<text class="la" transform="translate(1267.51,682.10) scale(1,1.56)" fill="#d2d2d2">22</text>
<text class="la" transform="translate(1358.41,682.10) scale(1,1.56)" fill="#d2d2d2">23</text>
<text class="la" transform="translate(1450.41,682.10) scale(1,1.56)" fill="#d2d2d2">00</text>
<text class="la" transform="translate(1533.11,682.10) scale(1,1.56)" fill="#d2d2d2">01</text>
<text class="la" transform="translate(1614.41,682.10) scale(1,1.56)" fill="#d2d2d2">02</text>
<text class="la" transform="translate(1697.21,682.10) scale(1,1.56)" fill="#d2d2d2">03</text>
<text class="la" transform="translate(1771.91,682.10) scale(1,1.56)" fill="#d2d2d2">04</text>
<text class="la" transform="translate(1836.21,682.10) scale(1,1.56)" fill="#d2d2d2">05</text>
<text class="la" transform="translate(1877.41,682.10) scale(1,1.56)" fill="#d2d2d2">06</text>
<text class="la" transform="translate(1450.21,657.70) scale(1,1.56)" fill="#d2d2d2">25</text>
<rect x="9" y="697.7" width="1988" height="375.5" fill="#1a1a1a"/>
<rect x="10.2" y="699.5" width="1897.0" height="349.5" fill="#000"/>
<clipPath id="cp2"><rect x="11.2" y="700.5" width="1895.0" height="347.5"/></clipPath>
<clipPath id="ca2"><rect x="9" y="698.5" width="1988" height="374.7"/></clipPath>
<path d="M11.2 716.8H1906.2M11.2 786.3H1906.2M11.2 855.8H1906.2M11.2 925.3H1906.2M11.2 994.8H1906.2M72.6 700.0V1049.0M177.2 700.0V1049.0M272.6 700.0V1049.0M366.4 700.0V1049.0M461.4 700.0V1049.0M555.5 700.0V1049.0M649.2 700.0V1049.0M744.2 700.0V1049.0M808.3 700.0V1049.0M903.7 700.0V1049.0M994.5 700.0V1049.0M1086.3 700.0V1049.0M1174.0 700.0V1049.0M1266.0 700.0V1049.0M1356.9 700.0V1049.0M1448.9 700.0V1049.0M1531.6 700.0V1049.0M1612.9 700.0V1049.0M1695.7 700.0V1049.0M1770.4 700.0V1049.0M1834.7 700.0V1049.0M1902.2 700.0V1049.0" stroke="#e0e0e0" stroke-width="1.5" stroke-dasharray="1.45 1.65" fill="none" opacity="0.84"/>
<path d="M153.4 700.0V1049.0" stroke="#e0e0e0" stroke-width="3.2" stroke-dasharray="1.45 1.65" fill="none" opacity="0.92"/>
<g clip-path="url(#cp2)"><path d="M12.9,833.5H14.5V834.2H16.1V831.2H17.7V829.8H19.2V827.2H20.8V828.5H22.4V831.5H24.0V830.6H25.6V834.3H27.1V834.6H28.7V837.1H30.3V838.7H31.9V836.3H33.5V843.9H35.0V839.8H36.6V836.5H38.2V827.0H39.8V822.1H41.4V823.3H42.9V825.9H44.5V825.6H46.1V819.9H47.7V816.4H49.3V816.1H50.8V821.5H52.4V814.7H54.0V803.4H55.6V809.2H57.2V808.3H58.7V811.7H60.3V808.9H61.9V810.2H63.5V811.8H65.1V810.8H66.6V811.0H68.2V807.8H69.8V801.6H71.4V795.7H73.0V793.4H74.5V794.5H76.1V786.4H77.7V784.1H79.3V779.6H80.9V772.7H82.4V777.2H84.0V779.9H85.6V770.0H87.2V772.0H88.8V771.7H90.3V769.1H91.9V772.1H93.5V772.4H95.1V770.6H96.7V776.1H98.2V775.4H99.8V780.6H101.4V787.6H103.0V785.9H104.6V784.6H106.1V777.6H107.7V777.5H109.3V774.9H110.9V778.5H112.5V778.9H114.0V781.5H115.6V784.3H117.2V790.2H118.8V783.2H120.4V784.9H121.9V789.3H123.5V792.3H125.1V790.3H126.7V784.3H128.3V782.2H129.8V787.6H131.4V784.7H133.0V786.1H134.6V793.5H136.2V796.2H137.7V796.8H139.3V801.2H140.9V804.4H142.5V803.7H144.1V797.4H145.6V790.0H147.2V782.8H148.8V768.8H150.4V771.0H152.0V782.1H153.5V859.6H155.1V805.2H156.7V790.6H158.3V779.3H159.9V772.0H161.4V779.1H163.0V788.9H164.6V789.0H166.2V801.5H167.8V795.3H169.3V788.1H170.9V783.7H172.5V779.0H174.1V772.3H175.7V769.5H177.2V763.7H178.8V773.1H180.4V809.2H182.0V803.0H183.6V794.9H185.1V781.5H186.7V780.9H188.3V773.2H189.9V767.8H191.5V767.6H193.0V765.9H194.6V754.0H196.2V745.8H197.8V726.8H199.4V738.0H200.9V733.0H202.5V726.2H204.1V732.2H205.7V737.6H207.3V734.6H208.8V731.2H210.4V729.1H212.0V727.1H213.6V724.1H215.2V719.5H216.7V723.9H218.3V732.7H219.9V740.0H221.5V736.9H223.1V736.7H224.6V746.8H226.2V735.6H227.8V726.7H229.4V737.9H231.0V741.9H232.5V750.1H234.1V753.0H235.7V756.8H237.3V751.2H238.9V745.0H240.4V755.5H242.0V758.5H243.6V756.5H245.2V758.4H246.8V760.8H248.3V759.1H249.9V755.2H251.5V768.2H253.1V777.3H254.7V775.5H256.2V776.4H257.8V780.7H259.4V783.1H261.0V785.9H262.6V780.0H264.1V783.8H265.7V785.9H267.3V783.4H268.9V788.7H270.5V798.0H272.0V802.3H273.6V774.7H275.2V737.9H276.8V755.9H278.4V768.4H279.9V767.6H281.5V765.1H283.1V761.0H284.7V765.0H286.3V749.1H287.8V760.1H289.4V745.8H291.0V737.6H292.6V761.0H294.2V783.7H295.7V800.9H297.3V837.1H298.9V881.3H300.5V845.2H302.1V820.0H303.6V833.8H305.2V851.5H306.8V829.4H308.4V818.4H310.0V824.6H311.5V838.3H313.1V846.3H314.7V853.6H316.3V813.7H317.9V828.7H319.4V841.0H321.0V825.7H322.6V826.3H324.2V815.7H325.8V818.2H327.3V820.9H328.9V842.0H330.5V840.8H332.1V842.5H333.7V828.8H335.2V826.1H336.8V808.8H338.4V822.9H340.0V820.3H341.6V817.1H343.1V824.9H344.7V805.8H346.3V799.7H347.9V790.7H349.5V793.8H351.0V785.2H352.6V786.3H354.2V796.8H355.8V812.5H357.4V812.9H358.9V803.3H360.5V799.4H362.1V774.8H363.7V787.7H365.3V788.3H366.8V786.1H368.4V786.0H370.0V786.0H371.6V787.6H373.2V808.7H374.7V808.9H376.3V807.1H377.9V820.6H379.5V826.5H381.1V840.9H382.6V839.8H384.2V836.6H385.8V842.8H387.4V849.6H389.0V853.3H390.5V861.7H392.1V860.6H393.7V864.6H395.3V866.5H396.9V859.9H398.4V842.5H400.0V837.0H401.6V832.7H403.2V838.6H404.8V840.6H406.3V845.9H407.9V840.9H409.5V847.8H411.1V843.8H412.7V840.3H414.2V838.1H415.8V837.1H417.4V833.0H419.0V822.6H420.6V818.5H422.1V817.1H423.7V813.6H425.3V816.0H426.9V819.1H428.5V821.7H430.0V813.8H431.6V813.9H433.2V815.2H434.8V808.8H436.4V806.3H437.9V815.0H439.5V819.1H441.1V822.2H442.7V828.2H444.3V833.7H445.8V838.6H447.4V831.7H449.0V834.2H450.6V837.1H452.2V809.4H453.7V834.7H455.3V827.7H456.9V836.0H458.5V832.2H460.1V829.8H461.6V824.1H463.2V819.3H464.8V824.9H466.4V823.9H468.0V822.2H469.5V821.2H471.1V818.8H472.7V811.0H474.3V824.5H475.9V832.9H477.4V836.7H479.0V833.7H480.6V833.8H482.2V831.4H483.8V830.4H485.3V803.0H486.9V826.6H488.5V829.9H490.1V827.1H491.7V821.1H493.2V820.2H494.8V806.2H496.4V814.5H498.0V823.2H499.6V819.9H501.1V828.5H502.7V836.1H504.3V832.8H505.9V832.0H507.5V831.1H509.0V826.0H510.6V829.1H512.2V834.5H513.8V827.8H515.4V817.1H516.9V808.9H518.5V804.4H520.1V809.9H521.7V817.5H523.3V820.4H524.8V819.8H526.4V820.6H528.0V832.7H529.6V833.8H531.2V839.4H532.7V839.5H534.3V854.2H535.9V857.9H537.5V875.3H539.1V876.4H540.6V885.7H542.2V889.5H543.8V887.6H545.4V893.7H547.0V889.2H548.5V881.8H550.1V883.9H551.7V883.7H553.3V888.5H554.9V893.0H556.4V897.6H558.0V910.5H559.6V916.8H561.2V921.1H562.8V917.2H564.3V932.0H565.9V919.3H567.5V908.0H569.1V912.1H570.7V908.4H572.2V917.3H573.8V917.6H575.4V911.5H577.0V912.4H578.6V907.6H580.1V912.0H581.7V914.7H583.3V916.5H584.9V913.8H586.5V915.6H588.0V915.8H589.6V914.2H591.2V913.5H592.8V911.8H594.4V910.0H595.9V912.1H597.5V913.8H599.1V916.4H600.7V913.5H602.3V909.2H603.8V905.8H605.4V904.5H607.0V906.5H608.6V908.8H610.2V907.2H611.7V903.4H613.3V904.3H614.9V903.5H616.5V909.0H618.1V910.2H619.6V909.3H621.2V903.7H622.8V899.5H624.4V909.1H626.0V912.1H627.5V911.7H629.1V902.5H630.7V892.9H632.3V892.4H633.9V897.4H635.4V898.6H637.0V900.1H638.6V903.9H640.2V911.3H641.8V917.2H643.3V915.8H644.9V917.6H646.5V915.1H648.1V913.7H649.7V915.4H651.2V918.4H652.8V917.2H654.4V913.0H656.0V903.2H657.6V904.2H659.1V905.5H660.7V907.9H662.3V916.5H663.9V918.6H665.5V922.5H667.0V923.1H668.6V933.0H670.2V931.4H671.8V928.7H673.4V931.8H674.9V941.0H676.5V937.1H678.1V943.2H679.7V940.2H681.3V930.0H682.8V932.0H684.4V939.2H686.0V942.0H687.6V945.1H689.2V921.7H690.7V921.9H692.3V926.3H693.9V928.7H695.5V927.3H697.1V919.0H698.6V913.2H700.2V917.0H701.8V912.6H703.4V908.1H705.0V905.7H706.5V904.6H708.1V908.8H709.7V903.4H711.3V904.9H712.9V905.3H714.4V902.6H716.0V898.7H717.6V895.8H719.2V890.5H720.8V896.5H722.3V891.5H723.9V891.7H725.5V900.6H727.1V905.3H728.7V903.8H730.2V908.3H731.8V906.3H733.4V899.1H735.0V903.5H736.6V904.7H738.1V896.3H739.7V893.6H741.3V896.3H742.9V899.7H744.5V900.2H746.0V906.0H747.6V909.4H749.2V913.5H750.8V913.9H752.4V913.8H753.9V911.4H755.5V907.1H757.1V910.6H758.7V910.8H760.3V912.3H761.8V911.7H763.4V910.1H765.0V924.2H766.6V902.3H768.2V903.2H769.7V907.5H771.3V909.4H772.9V911.9H774.5V916.5H776.1V919.2H777.6V929.1H779.2V932.7H780.8V926.1H782.4V920.1H784.0V924.5H785.5V921.5H787.1V928.0H788.7V932.8H790.3V931.5H791.9V938.0H793.4V935.0H795.0V931.5H796.6V940.6H798.2V944.9H799.8V961.3H801.3V973.9H802.9V979.5H804.5V959.2H806.1V948.2H807.7V926.1H809.2V957.5H810.8V1009.4H812.4V878.7H814.0V870.4H815.6V866.5H817.1V859.7H818.7V850.9H820.3V848.4H821.9V860.4H823.5V864.0H825.0V868.9H826.6V870.3H828.2V880.0H829.8V875.4H831.4V865.9H832.9V865.5H834.5V870.0H836.1V864.0H837.7V870.6H839.3V876.4H840.8V873.1H842.4V873.4H844.0V867.4H845.6V857.2H847.2V842.9H848.7V837.4H850.3V835.0H851.9V834.7H853.5V830.7H855.1V822.0H856.6V829.8H858.2V826.8H859.8V829.1H861.4V832.8H863.0V803.6H864.5V794.3H866.1V807.0H867.7V807.3H869.3V807.7H870.9V814.8H872.4V821.0H874.0V828.1H875.6V829.5H877.2V838.7H878.8V839.5H880.3V852.0H881.9V844.4H883.5V836.2H885.1V846.1H886.7V848.9H888.2V848.1H889.8V837.6H891.4V847.0H893.0V850.0H894.6V850.6H896.1V846.2H897.7V843.0H899.3V843.9H900.9V837.9H902.5V840.9H904.0V848.6H905.6V854.4H907.2V854.5H908.8V861.8H910.4V850.0H911.9V846.7H913.5V840.8H915.1V841.0H916.7V838.8H918.3V850.0H919.8V852.2H921.4V850.5H923.0V855.6H924.6V862.1H926.2V873.6H927.7V873.7H929.3V873.4H930.9V868.9H932.5V867.8H934.1V863.9H935.6V870.3H937.2V870.8H938.8V878.7H940.4V884.4H942.0V881.9H943.5V876.3H945.1V875.9H946.7V880.9H948.3V881.1H949.9V887.6H951.4V884.9H953.0V881.2H954.6V877.7H956.2V874.0H957.8V874.3H959.3V878.9H960.9V883.1H962.5V886.0H964.1V883.7H965.7V878.0H967.2V870.8H968.8V871.8H970.4V877.6H972.0V871.7H973.6V878.8H975.1V882.0H976.7V883.6H978.3V885.6H979.9V885.3H981.5V887.4H983.0V885.7H984.6V886.4H986.2V878.4H987.8V878.9H989.4V879.2H990.9V876.0H992.5V875.6H994.1V882.0H995.7V881.4H997.3V888.4H998.8V892.3H1000.4V886.5H1002.0V882.2H1003.6V879.2H1005.2V874.5H1006.7V879.2H1008.3V881.9H1009.9V880.2H1011.5V881.8H1013.1V884.3H1014.6V877.5H1016.2V877.5H1017.8V877.6H1019.4V873.1H1021.0V876.1H1022.5V875.2H1024.1V878.5H1025.7V876.9H1027.3V880.7H1028.9V870.9H1030.4V861.6H1032.0V860.0H1033.6V854.2H1035.2V866.3H1036.8V869.8H1038.3V872.0H1039.9V882.8H1041.5V893.8H1043.1V900.1H1044.7V904.2H1046.2V902.8H1047.8V906.8H1049.4V907.8H1051.0V898.8H1052.6V891.8H1054.1V889.0H1055.7V889.4H1057.3V889.6H1058.9V887.4H1060.5V881.6H1062.0V880.3H1063.6V884.0H1065.2V876.1H1066.8V874.7H1068.4V879.6H1069.9V881.6H1071.5V877.1H1073.1V874.3H1074.7V874.6H1076.3V870.5H1077.8V863.5H1079.4V863.5H1081.0V860.0H1082.6V863.7H1084.2V864.2H1085.7V862.7H1087.3V859.7H1088.9V860.0H1090.5V857.7H1092.1V851.7H1093.6V853.4H1095.2V848.6H1096.8V852.2H1098.4V855.4H1100.0V860.7H1101.5V857.0H1103.1V856.9H1104.7V856.4H1106.3V850.7H1107.9V854.8H1109.4V855.5H1111.0V861.9H1112.6V863.8H1114.2V862.3H1115.8V867.8H1117.3V869.6H1118.9V870.1H1120.5V876.0H1122.1V872.2H1123.7V869.0H1125.2V869.8H1126.8V863.3H1128.4V866.8H1130.0V871.5H1131.6V877.7H1133.1V880.0H1134.7V885.5H1136.3V887.1H1137.9V888.7H1139.5V886.5H1141.0V876.0H1142.6V879.4H1144.2V869.1H1145.8V869.1H1147.4V869.0H1148.9V872.7H1150.5V867.1H1152.1V861.1H1153.7V863.7H1155.3V866.9H1156.8V870.4H1158.4V876.6H1160.0V871.6H1161.6V874.9H1163.2V880.5H1164.7V879.1H1166.3V880.7H1167.9V871.9H1169.5V872.0H1171.1V863.7H1172.6V876.8H1174.2V880.4H1175.8V892.4H1177.4V897.3H1179.0V893.7H1180.5V893.1H1182.1V892.2H1183.7V890.0H1185.3V887.7H1186.9V888.8H1188.4V887.0H1190.0V891.6H1191.6V893.3H1193.2V890.3H1194.8V882.5H1196.3V875.4H1197.9V875.8H1199.5V872.6H1201.1V889.4H1202.7V903.6H1204.2V905.4H1205.8V904.3H1207.4V907.2H1209.0V904.5H1210.6V913.1H1212.1V927.5H1213.7V928.3H1215.3V931.6H1216.9V926.1H1218.5V919.9H1220.0V908.7H1221.6V914.0H1223.2V911.8H1224.8V929.7H1226.4V934.6H1227.9V932.7H1229.5V932.7H1231.1V945.3H1232.7V949.5H1234.3V949.5H1235.8V957.5H1237.4V959.8H1239.0V961.0H1240.6V956.3H1242.2V954.2H1243.7V954.4H1245.3V954.1H1246.9V960.0H1248.5V964.7H1250.1V963.1H1251.6V968.3H1253.2V963.1H1254.8V961.4H1256.4V958.4H1258.0V971.8H1259.5V990.4H1261.1V1004.7H1262.7V986.1H1264.3V999.4H1265.9V997.0H1267.4V987.7H1269.0V996.3H1270.6V1002.4H1272.2V1002.3H1273.8V1007.7H1275.3V1007.0H1276.9V1016.0H1278.5V1017.7H1280.1V1027.3H1281.7V1013.8H1283.2V1013.5H1284.8V1015.6H1286.4V1018.2H1288.0V1020.1H1289.6V1024.4H1291.1V1024.1H1292.7V1017.2H1294.3V1017.1H1295.9V1018.5H1297.5V1016.1H1299.0V1013.2H1300.6V1021.3H1302.2V1016.6H1303.8V1003.4H1305.4V1006.5H1306.9V1003.9H1308.5V993.2H1310.1V971.5H1311.7V987.0H1313.3V983.9H1314.8V984.7H1316.4V967.5H1318.0V952.8H1319.6V935.9H1321.2V930.4H1322.7V923.4H1324.3V931.4H1325.9V926.1H1327.5V921.4H1329.1V911.9H1330.6V909.3H1332.2V909.1H1333.8V910.0H1335.4V910.8H1337.0V915.0H1338.5V931.3H1340.1V951.7H1341.7V968.9H1343.3V962.0H1344.9V965.5H1346.4V965.3H1348.0V973.5H1349.6V961.8H1351.2V957.4H1352.8V969.6H1354.3V971.5H1355.9V959.9H1357.5V989.6H1359.1V947.7H1360.7V959.1H1362.2V973.1H1363.8V975.1H1365.4V986.4H1367.0V967.6H1368.6V961.3H1370.1V958.1H1371.7V969.2H1373.3V974.5H1374.9V985.2H1376.5V988.1H1378.0V1001.9H1379.6V1008.3H1381.2V980.0H1382.8V980.5H1384.4V978.7H1385.9V982.2H1387.5V970.4H1389.1V968.2H1390.7V964.9H1392.3V960.8H1393.8V954.1H1395.4V949.4H1397.0V933.2H1398.6V926.3H1400.2V944.0H1401.7V951.9H1403.3V958.2H1404.9V948.3H1406.5V938.8H1408.1V931.3H1409.6V916.8H1411.2V922.9H1412.8V935.9H1414.4V949.2H1416.0V905.2H1417.5V888.4H1419.1V890.1H1420.7V886.8H1422.3V874.7H1423.9V869.3H1425.4V899.1H1427.0V928.4H1428.6V947.2H1430.2V958.6H1431.8V966.2H1433.3V958.9H1434.9V954.9H1436.5V963.2H1438.1V962.8H1439.7V983.1H1441.2V1002.7H1442.8V993.5H1444.4V1003.2H1446.0V1024.4H1447.6V1016.6H1449.1V1010.8H1450.7V1025.0H1452.3V1017.8H1453.9V1010.0H1455.5V1010.2H1457.0V986.8H1458.6V992.6H1460.2V986.5H1461.8V991.1H1463.4V997.1H1464.9V997.9H1466.5V999.2H1468.1V999.3H1469.7V1001.3H1471.3V998.5H1472.8V994.0H1474.4V992.1H1476.0V984.3H1477.6V980.1H1479.2V969.1H1480.7V971.2H1482.3V976.1H1483.9V979.2H1485.5V982.8H1487.1V971.4H1488.6V971.7H1490.2V965.7H1491.8V965.0H1493.4V966.0H1495.0V980.0H1496.5V991.2H1498.1V989.9H1499.7V988.8H1501.3V995.8H1502.9V995.1H1504.4V990.8H1506.0V981.3H1507.6V976.2H1509.2V969.3H1510.8V962.0H1512.3V962.6H1513.9V957.0H1515.5V952.1H1517.1V951.6H1518.7V951.3H1520.2V946.2H1521.8V953.3H1523.4V959.1H1525.0V963.0H1526.6V972.3H1528.1V963.6H1529.7V964.5H1531.3V960.4H1532.9V958.6H1534.5V975.6H1536.0V988.3H1537.6V994.5H1539.2V996.5H1540.8V998.0H1542.4V999.1H1543.9V1000.1H1545.5V1001.0H1547.1V1010.2H1548.7V1005.6H1550.3V1008.4H1551.8V1003.2H1553.4V1008.7H1555.0V1015.0H1556.6V1023.7H1558.2V1023.9H1559.7V1029.8H1561.3V1030.0H1562.9V1024.2H1564.5V1005.3H1566.1V999.2H1567.6V993.3H1569.2V995.4H1570.8V996.9H1572.4V995.4H1574.0V992.2H1575.5V983.6H1577.1V976.5H1578.7V974.7H1580.3V962.6H1581.9V957.8H1583.4V954.3H1585.0V947.2H1586.6V952.2H1588.2V956.8H1589.8V959.5H1591.3V968.0H1592.9V976.1H1594.5V979.0H1596.1V983.4H1597.7V966.8H1599.2V958.1H1600.8V961.6H1602.4V982.2H1604.0V985.5H1605.6V974.1H1607.1V984.2H1608.7V969.3H1610.3V956.1H1611.9V953.7H1613.5V940.0H1615.0V940.3H1616.6V936.3H1618.2V933.1H1619.8V927.3H1621.4V925.5H1622.9V920.6H1624.5V920.7H1626.1V925.4H1627.7V927.3H1629.3V968.2H1630.8V953.0H1632.4V959.6H1634.0V967.8H1635.6V966.3H1637.2V962.4H1638.7V956.5H1640.3V954.4H1641.9V951.5H1643.5V940.3H1645.1V938.7H1646.6V946.2H1648.2V949.4H1649.8V949.5H1651.4V950.8H1653.0V948.9H1654.5V974.7H1656.1V982.0H1657.7V978.5H1659.3V974.8H1660.9V975.5H1662.4V983.5H1664.0V981.8H1665.6V975.1H1667.2V974.4H1668.8V975.4H1670.3V971.7H1671.9V974.8H1673.5V969.4H1675.1V967.7H1676.7V975.5H1678.2V973.0H1679.8V977.0H1681.4V977.9H1683.0V978.3H1684.6V980.6H1686.1V978.6H1687.7V975.3H1689.3V972.7H1690.9V973.1H1692.5V967.4H1694.0V963.4H1695.6V959.7H1697.2V960.5H1698.8V960.2H1700.4V955.5H1701.9V951.7H1703.5V945.3H1705.1V947.3H1706.7V954.1H1708.3V960.0H1709.8V959.2H1711.4V960.1H1713.0V965.1H1714.6V965.2H1716.2V968.5H1717.7V969.7H1719.3V969.6H1720.9V973.0H1722.5V967.7H1724.1V967.4H1725.6V972.4H1727.2V978.7H1728.8V984.2H1730.4V983.9H1732.0V981.0H1733.5V983.9H1735.1V988.2H1736.7V990.5H1738.3V992.2H1739.9V986.2H1741.4V985.3H1743.0V984.6H1744.6V984.0H1746.2V983.1H1747.8V985.7H1749.3V989.2H1750.9V990.9H1752.5V989.7H1754.1V994.5H1755.7V986.4H1757.2V984.8H1758.8V988.2H1760.4V984.3H1762.0V985.8H1763.6V985.2H1765.1V985.3H1766.7V986.7H1768.3V984.3H1769.9V986.1H1771.5V984.1H1773.0V986.7H1774.6V989.0H1776.2V993.7H1777.8V996.6H1779.4V991.0H1780.9V995.8H1782.5V998.6H1784.1V1001.4H1785.7V1006.5H1787.3V1011.5H1788.8V1016.5H1790.4V1008.5H1792.0V1003.0H1793.6V996.1H1795.2V1002.1H1796.7V1002.9H1798.3V1008.2H1799.9V1011.2H1801.5V1016.9H1803.1V1015.0H1804.6V1018.4H1806.2V1018.2H1807.8V1015.6H1809.4V1015.3H1811.0V1012.0H1812.5V1017.0H1814.1V1012.8H1815.7V1010.6H1817.3V1011.9H1818.9V1007.9H1820.4V1006.7H1822.0V1009.1H1823.6V1011.9H1825.2V1009.9H1826.8V1010.7H1828.3V1009.7H1829.9V1004.7H1831.5V1001.1H1833.1V1001.2H1834.7V1001.4H1836.2V1001.7H1837.8V1002.6H1839.4V1005.4H1841.0V1005.3H1842.6V1013.4H1844.1V1014.1H1845.7V1021.7H1847.3V1021.5H1848.9V1022.2H1850.5V1015.5H1852.0V1003.9H1853.6V996.4H1855.2V981.0H1856.8V977.3H1858.4V976.3H1859.9V975.8H1861.5V967.3H1863.1V958.0H1864.7V955.0H1866.3V960.1H1867.8V957.2H1869.4V959.8H1871.0V960.8H1872.6V956.9H1874.2V952.2H1875.7V944.5H1877.3V937.7H1878.9V936.6H1880.5V942.7H1882.1V945.0H1883.6V942.2H1885.2V944.9H1886.8V943.6H1888.4V941.5H1890.0V939.1H1891.5V936.3H1893.1V938.8H1894.7V938.0H1896.3V947.5H1897.9V949.8H1899.4V950.4H1901.0V962.5H1902.6V972.1H1904.2V989.5H1904.4V1014.8" fill="none" stroke="#ff0000" stroke-width="3" stroke-linejoin="miter"/></g>
<path d="M10.2 1050.0V698.7H1907.2V1049.0" stroke="#f4f4f4" stroke-width="2" fill="none"/>
<path d="M9.2 1049.0H1908.2" stroke="#f4f4f4" stroke-width="2.2" fill="none"/>
<text class="la" transform="translate(11.71,720.10) scale(1,1.56)" fill="#d2d2d2">[</text>
<text class="cj" x="20.72" y="720.10" fill="#d2d2d2">金</text>
<text class="la" transform="translate(50.19,720.10) scale(1,1.56)" fill="#d2d2d2">26/12 26,570</text>
<text class="la" style="font-size:22px;letter-spacing:0" x="168.04" y="720.50" fill="#d2d2d2">×</text>
<text class="la" transform="translate(184.87,720.10) scale(1,1.56)" fill="#d2d2d2">1.00]</text>
<text class="cj" x="232.36" y="720.10" fill="#d2d2d2">－</text>
<text class="la" transform="translate(252.21,720.10) scale(1,1.56)" fill="#d2d2d2">[</text>
<text class="cj" x="261.22" y="720.10" fill="#d2d2d2">白金</text>
<text class="la" transform="translate(309.93,720.10) scale(1,1.56)" fill="#d2d2d2">26/12 10,699</text>
<text class="la" style="font-size:22px;letter-spacing:0" x="427.78" y="720.50" fill="#d2d2d2">×</text>
<text class="la" transform="translate(444.61,720.10) scale(1,1.56)" fill="#d2d2d2">1.00]</text>
<text class="cj" x="501.72" y="720.10" fill="#d2d2d2">終値</text>
<text class="cj" x="549.82" y="720.10" fill="#d2d2d2">時刻</text>
<text class="la" transform="translate(588.91,720.10) scale(1,1.56)" fill="#d2d2d2">:06:00 15,871</text>
<g clip-path="url(#ca2)">
<text class="la" transform="translate(1908.91,712.90) scale(1,1.56)" fill="#d2d2d2">16,300</text>
<text class="la" transform="translate(1908.91,782.40) scale(1,1.56)" fill="#d2d2d2">16,200</text>
<text class="la" transform="translate(1908.91,851.90) scale(1,1.56)" fill="#d2d2d2">16,100</text>
<text class="la" transform="translate(1908.91,921.40) scale(1,1.56)" fill="#d2d2d2">16,000</text>
<text class="la" transform="translate(1908.91,990.90) scale(1,1.56)" fill="#d2d2d2">15,900</text>
<text class="la" transform="translate(1908.91,1060.40) scale(1,1.56)" fill="#d2d2d2">15,800</text>
</g>
<rect x="1908.0" y="997.6" width="89.79999999999995" height="34.4" fill="#d6d6d6"/>
<text class="la" transform="translate(1923.61,1022.00) scale(1,1.56)" fill="#000" font-weight="bold">15,871</text>
<text class="la" transform="translate(74.11,1064.80) scale(1,1.56)" fill="#d2d2d2">05</text>
<text class="la" transform="translate(128.41,1064.80) scale(1,1.56)" fill="#ffffff" font-weight="bold">06</text>
<text class="la" transform="translate(178.71,1064.80) scale(1,1.56)" fill="#d2d2d2">09</text>
<text class="la" transform="translate(274.11,1064.80) scale(1,1.56)" fill="#d2d2d2">10</text>
<text class="la" transform="translate(367.91,1064.80) scale(1,1.56)" fill="#d2d2d2">11</text>
<text class="la" transform="translate(462.91,1064.80) scale(1,1.56)" fill="#d2d2d2">12</text>
<text class="la" transform="translate(557.01,1064.80) scale(1,1.56)" fill="#d2d2d2">13</text>
<text class="la" transform="translate(650.71,1064.80) scale(1,1.56)" fill="#d2d2d2">14</text>
<text class="la" transform="translate(745.71,1064.80) scale(1,1.56)" fill="#d2d2d2">15</text>
<text class="la" transform="translate(809.81,1064.80) scale(1,1.56)" fill="#d2d2d2">17</text>
<text class="la" transform="translate(905.21,1064.80) scale(1,1.56)" fill="#d2d2d2">18</text>
<text class="la" transform="translate(996.01,1064.80) scale(1,1.56)" fill="#d2d2d2">19</text>
<text class="la" transform="translate(1087.81,1064.80) scale(1,1.56)" fill="#d2d2d2">20</text>
<text class="la" transform="translate(1175.51,1064.80) scale(1,1.56)" fill="#d2d2d2">21</text>
<text class="la" transform="translate(1267.51,1064.80) scale(1,1.56)" fill="#d2d2d2">22</text>
<text class="la" transform="translate(1358.41,1064.80) scale(1,1.56)" fill="#d2d2d2">23</text>
<text class="la" transform="translate(1450.41,1064.80) scale(1,1.56)" fill="#d2d2d2">00</text>
<text class="la" transform="translate(1533.11,1064.80) scale(1,1.56)" fill="#d2d2d2">01</text>
<text class="la" transform="translate(1614.41,1064.80) scale(1,1.56)" fill="#d2d2d2">02</text>
<text class="la" transform="translate(1697.21,1064.80) scale(1,1.56)" fill="#d2d2d2">03</text>
<text class="la" transform="translate(1771.91,1064.80) scale(1,1.56)" fill="#d2d2d2">04</text>
<text class="la" transform="translate(1836.21,1064.80) scale(1,1.56)" fill="#d2d2d2">05</text>
<text class="la" transform="translate(1877.41,1064.80) scale(1,1.56)" fill="#d2d2d2">06</text>
<text class="la" transform="translate(1450.21,1040.40) scale(1,1.56)" fill="#d2d2d2">25</text>
</svg>
<!-- title text -->
<div class="tt" id="ttl" style="left:47px;top:11.6px;font-size:18.2px;color:#000"><span class="j" style="font-size:19px">金</span>1<span class="j" style="font-size:19px">分足</span>[2026/12]1.00 - <span class="j" style="font-size:19px">白金</span>1<span class="j" style="font-size:19px">分足</span>[2026/12]1.00</div>
<!-- toolbar texts -->
<div class="tt j" style="left:17.6px;top:48.6px;font-size:19px">金</div>
<div class="tt" id="t1" style="left:52.6px;top:50.8px;font-size:17.7px">2026/12</div>
<div class="spin" style="left:127px;width:77px"><div class="tt" style="left:4.4px;top:2.2px;font-size:16.6px">1.00</div><div class="bt"><i class="u"></i><i class="d"></i></div></div>
<div class="vsep" style="left:211px"></div>
<div class="tt j" style="left:222.6px;top:48.6px;font-size:19px">白金</div>
<div class="tt" id="t2" style="left:276.4px;top:50.8px;font-size:17.7px">2026/12</div>
<div class="spin" style="left:350px;width:77px"><div class="tt" style="left:4.4px;top:2.2px;font-size:16.6px">1.00</div><div class="bt"><i class="u"></i><i class="d"></i></div></div>
<div class="vsep" style="left:433.4px"></div>
<div class="tt j" style="left:445.4px;top:48.6px;font-size:19px">分足</div>
<div class="dd" style="left:491.4px"></div>
<div class="spin" style="left:507.4px;width:71px"><div class="tt" style="left:4px;top:2.2px;font-size:16.6px">1200</div><div class="bt"><i class="u"></i><i class="d"></i></div></div>
<div class="tt" style="left:588.4px;top:48.6px;font-size:17.7px">1<span class="j" style="font-size:19px">分足</span></div>
<div class="dd" style="left:642.8px"></div>
<div class="vsep" style="left:663px"></div>
<div class="pressed" style="left:669.4px;width:27px"></div>
<div class="vsep" style="left:709px"></div>
<div class="pressed" style="left:714px;width:26.6px"></div>
<div class="vsep" style="left:860.6px"></div>
<div class="dd" style="left:896px"></div>
<div class="vsep" style="left:951.6px"></div>
<!-- window buttons -->
<div class="wbtn" style="left:1911px"></div>
<div class="wbtn" style="left:1942.2px"></div>
<div class="wbtn" style="left:1973.4px"></div>
<!-- icons -->
<svg width="1997" height="76" viewBox="0 0 1997 76" style="position:absolute;left:0;top:0">
<!-- app icon -->
<g>
<rect x="16" y="11.4" width="21.4" height="21.6" fill="#f2f2f2"/>
<path d="M16.6 11.6V32.6H37.4" stroke="#8c8c8c" stroke-width="1.5" fill="none"/>
<path d="M21.2 22v8M27.8 14.2v8M33.4 15v11" stroke="#ff0000" stroke-width="2.6" stroke-linecap="round"/>
<path d="M24.4 15v11M30.6 17.4v8" stroke="#0a84ff" stroke-width="2.4" stroke-linecap="round"/>
</g>
<!-- restore/tile icon -->
<g fill="none" stroke="#6a6a6a" stroke-width="1.8">
<rect x="1876.6" y="12.6" width="16" height="20" fill="#f0f0f0"/>
<rect x="1882.6" y="17.4" width="14.6" height="11" fill="#f4f4f4"/>
<path d="M1883 21h14M1883 24.6h14M1887.4 18v10M1892 18v10" stroke-width="0.8"/>
</g>
<!-- min max close glyphs -->
<path d="M1918.4 27.2h9.6" stroke="#505050" stroke-width="2.6"/>
<rect x="1950.6" y="17.6" width="10.6" height="10" fill="none" stroke="#505050" stroke-width="1.5"/><path d="M1950 18h11.8" stroke="#505050" stroke-width="2.6"/>
<path d="M1981 17l11.6 11.6M1992.6 17l-11.6 11.6" stroke="#505050" stroke-width="2.2"/>
<!-- icon1: chart with arrow to top-left -->
<g>
<rect x="672.6" y="46.6" width="21.4" height="21" fill="#f6f5ee"/>
<path d="M673 56.400h21M673 59.400h21M673 62.400h21M673 65.400h21M673 49.600h21" stroke="#c9c9c4" stroke-width="0.900"/>
<path d="M677.200 46.600v21M672.600 52.800h21.400" stroke="#5848c0" stroke-width="1.700"/>
<path d="M691.400 66.400l-8.200-8.200" stroke="#a51cb4" stroke-width="3.200" fill="none"/>
<path d="M680.600 56l8.800 0.600-8.200 8.200z" fill="#a51cb4"/>
</g>
<!-- icon2: cursor -->
<path d="M719.400 48.600L735 55.200 729.800 57.400 736.400 64 733.600 66.600 727.200 60 723.600 65.400z" fill="#f1eeff" stroke="#6a4acc" stroke-width="1.900" stroke-linejoin="round"/>
<!-- hand -->
<g stroke="#c87814" stroke-width="1.5" fill="#fff4dc" stroke-linejoin="round">
<path d="M756.6 57.6c-1.4-2.4-3.4-4.4-4.8-3.4-1.2 1 .6 3 2 5.2 1.6 2.6 3.2 6.600 6.400 7.800 3.400 1.200 8.400.4 10-2.400 1.400-2.600 1.600-8.400 1.200-11.400-.2-1.600-2.400-1.800-2.800-.2l-.4 2.800.2-6.400c0-1.800-2.600-2-3-.2l-.4 5.200-.4-6.600c-.2-1.800-2.800-1.800-3 0l-.2 6.800-1.200-5.400c-.4-1.800-3-1.400-2.800.4z"/>
</g>
<!-- pencil -->
<g>
<path d="M790.4 66.6l2.400-6.400 12-12.600c1.400-1.200 4.200 1.200 3 2.800l-12 12.800z" fill="#ffc058" stroke="#d88a1c" stroke-width="1.4" stroke-linejoin="round"/>
<path d="M790.4 66.600l2.400-6.400 3 3.400z" fill="#f8e8c8" stroke="#b07820" stroke-width="0.8"/>
</g>
<!-- marker -->
<g>
<path d="M826 66.400l3-6 11-12.400c1.600-1.400 5 1.400 3.600 3.200l-11 12.200z" fill="#4a8cf0" stroke="#1c50b8" stroke-width="1.4" stroke-linejoin="round"/>
<path d="M824.600 68.200l4.600-7.600 3.400 3z" fill="#1c50b8"/>
<path d="M834.600 62.400l5.600-5.400 5.600 5.400-5.600 5.400z" fill="#14247a"/>
<path d="M838.400 60.600h0.010M842 60.600h0.010M838.400 64.200h0.010M842 64.200h0.010M840.200 62.400h0.010" stroke="#c8d4ff" stroke-width="1" stroke-linecap="round"/>
</g>
<!-- bar chart icon -->
<g>
<rect x="871" y="47.400" width="21.400" height="19.800" fill="#e9e9e9"/>
<path d="M871 51.400h21.400M871 55.400h21.400M871 59.400h21.400M871 63.400h21.400" stroke="#d2d2d2" stroke-width="0.800"/>
<path d="M871.600 47.400V67.200h21" stroke="#8a8a8a" stroke-width="1.300" fill="none"/>
<path d="M875.400 66.600V58M879.800 66.600V49.400M884.600 66.600V54M889 66.600V59.600" stroke="#1c8cf0" stroke-width="2.800"/>
</g>
<!-- chart x icon -->
<g>
<rect x="914.400" y="47.400" width="21.400" height="19.800" fill="#e9e9e9"/>
<path d="M914.400 51.400h21.400M914.400 55.400h21.400M914.400 59.400h21.400M914.400 63.400h21.400" stroke="#d2d2d2" stroke-width="0.800"/>
<path d="M915 47.400V67.200h21" stroke="#8a8a8a" stroke-width="1.300" fill="none"/>
<path d="M918.800 66.600V60M923 66.600V48.600M927.600 66.600V53M932 66.600V58" stroke="#1c8cf0" stroke-width="2.600"/>
<path d="M917.400 50.400l15.600 13.600M933 50.400l-15.600 13.600" stroke="#f01830" stroke-width="2"/>
</g>
<!-- refresh -->
<g>
<path d="M972.600 64.400a8.600 8.600 0 1 1-1.600-15" stroke="#1a86e8" stroke-width="3" fill="none"/>
<path d="M966.200 45.400l7.800 2.600-5.600 5.600z" fill="#1a86e8"/>
<text x="971.400" y="62.400" font-family="'Liberation Sans',sans-serif" font-weight="bold" font-size="11.500" fill="#1a5ad8">R</text>
</g>
<!-- wrench -->
<g>
<path d="M1967.400 66l9.600-9.400" stroke="#4a44f4" stroke-width="4.800" stroke-linecap="round"/>
<path d="M1967.800 65.600l8.800-8.600" stroke="#9c98ff" stroke-width="1.400" stroke-linecap="round"/>
<path d="M1980.600 47.400c-4.400 0.600-6.800 5-4.800 8.800 2 3.600 7 4.400 9.800 1.400 0.800-0.800 1.400-2 1.600-3.200l-4.200 1.800-3-2.800 1.600-4.200z" fill="#f4f2ff" stroke="#6058f0" stroke-width="1.700" stroke-linejoin="round"/>
</g>
</svg>
</body></html>
